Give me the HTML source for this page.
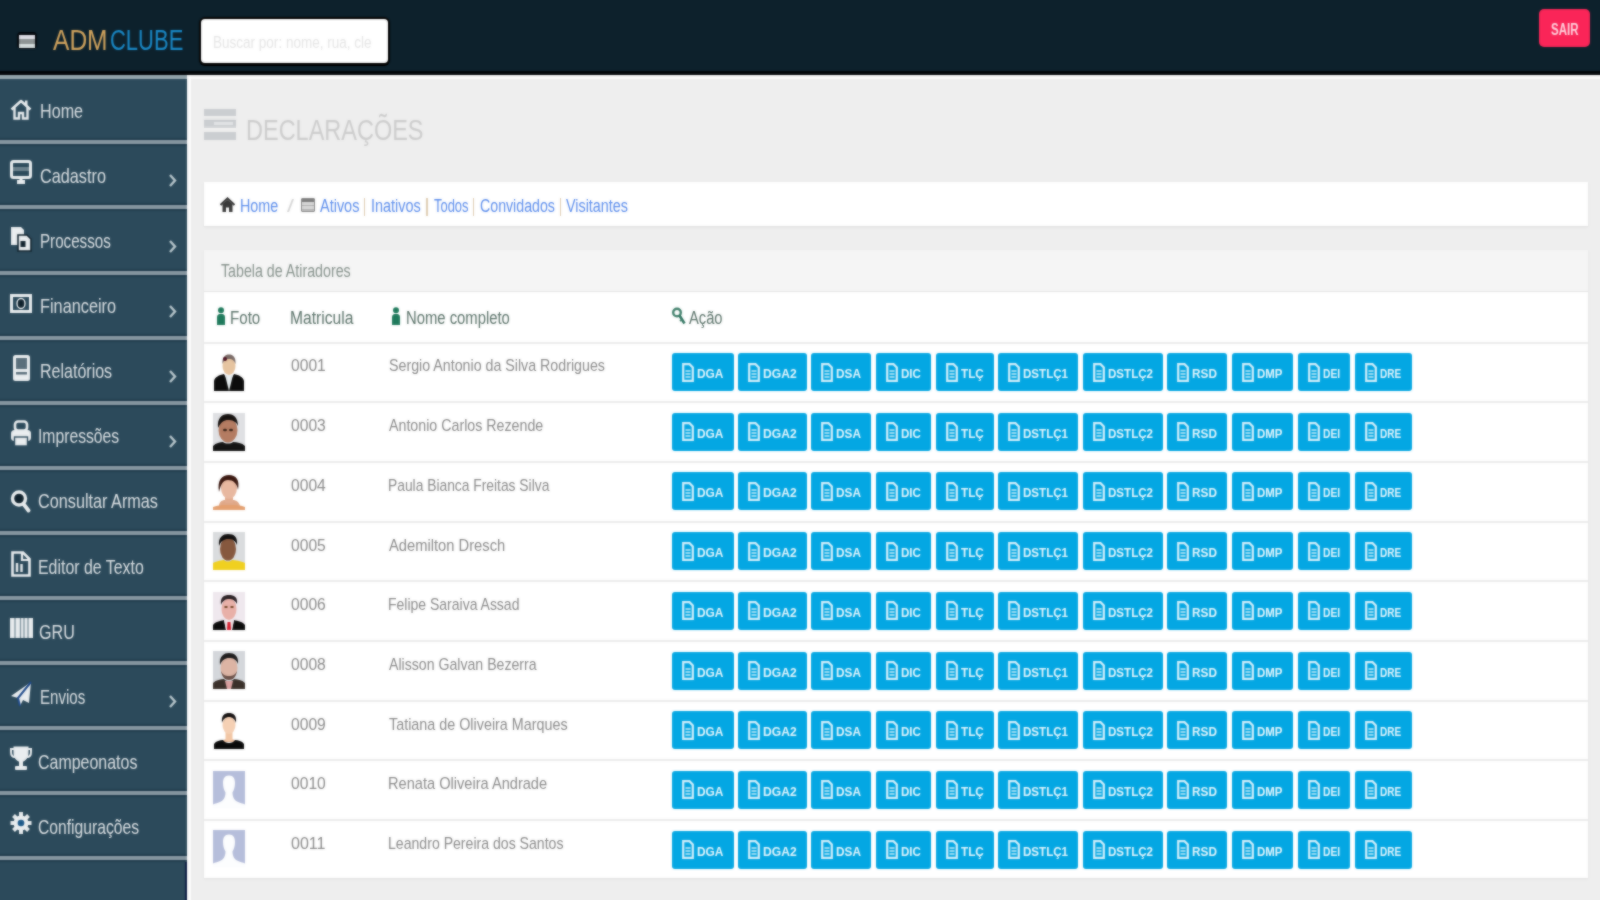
<!DOCTYPE html><html><head><meta charset="utf-8"><title>ADM Clube</title><style>
*{box-sizing:border-box;margin:0;padding:0}
html,body{width:1600px;height:900px;overflow:hidden;background:#eeeeee;font-family:"Liberation Sans", sans-serif}
#w{position:absolute;left:-20px;top:-20px;width:1640px;height:940px;background:#eeeeee;filter:none}
#w2{position:absolute;left:-20px;top:-20px;width:1640px;height:940px;background:#eeeeee;filter:blur(1px);opacity:0.6}
#c{position:absolute;left:20px;top:20px;width:1600px;height:900px}
.abs{position:absolute}
.t{position:absolute;line-height:1;white-space:nowrap;transform-origin:0 0}
.sep{position:absolute;left:-20px;width:207px;height:8px;background:#8898a2;border-top:2px solid #213d4e;border-bottom:2px solid #213d4e}
.row{position:absolute;left:204px;width:1384px;height:60px;border-top:2px solid #ececec}
.ph{position:absolute;left:212.5px}
.b{position:absolute;height:38px;background:#04a7e3;border-radius:3px}
.bt{position:absolute;line-height:1;white-space:nowrap;transform-origin:0 0;color:#f2fbff;font-size:13px}
</style></head><body><div id="w"><div id="c"><div class="abs" style="left:-20px;top:-20px;width:1640px;height:92px;background:#0d212c"></div><div class="abs" style="left:-20px;top:71px;width:1640px;height:4px;background:#03070a"></div><div class="abs" style="left:-20px;top:75px;width:1640px;height:4px;background:#f8f8f8"></div><div class="abs" style="left:17px;top:32px;width:20px;height:17px;background:#03080e;border-radius:4px"></div><div class="abs" style="left:19px;top:35px;width:16px;height:13px;background:linear-gradient(#dcdce4 0 4px,#8e9494 4px 9px,#d4dcdc 9px)"></div><div class="t" style="left:52.5px;top:25.5px;font-size:29px;color:#d4a65f;transform:scaleX(0.847);">ADM</div><div class="t" style="left:110.2px;top:25.5px;font-size:29px;color:#1a8ac9;transform:scaleX(0.758);">CLUBE</div><div class="abs" style="left:199px;top:16.5px;width:191px;height:49px;background:#000;border-radius:6px"></div><div class="abs" style="left:201px;top:19px;width:187px;height:44px;background:#fff;border-radius:4px"></div><div class="t" style="left:212.7px;top:35.0px;font-size:16px;color:#e6e6e6;transform:scaleX(0.845);">Buscar por: nome, rua, cle</div><div class="abs" style="left:1539px;top:9px;width:51px;height:38px;background:#fa2558;border-radius:5px"></div><div class="t" style="left:1551.0px;top:21.5px;font-size:16px;color:#ffd6e0;transform:scaleX(0.718);font-weight:bold;">SAIR</div><div class="abs" style="left:-20px;top:75px;width:207px;height:845px;background:#2c4a5b"></div><div class="abs" style="left:-20px;top:75px;width:207px;height:4px;background:#95a6ad"></div><div class="abs" style="left:187px;top:75px;width:4px;height:845px;background:#fbfbfb"></div><div class="abs" style="left:185px;top:860px;width:2px;height:60px;background:#0a1a40"></div><div class="sep" style="top:138.4px"></div><div class="t" style="left:40.2px;top:100.1px;font-size:21px;color:#dde2e5;transform:scaleX(0.769);">Home</div><div class="abs" style="left:10px;top:97.5px;line-height:0"><svg width="22" height="22" viewBox="0 0 22 22"><path d="M1.5 11.5 L11 3 L20.5 11.5" fill="none" stroke="#e9edef" stroke-width="2.6" stroke-linejoin="round"/><path d="M4.5 9.5 V20.5 H9 V15 H13 V20.5 H17.5 V9.5" fill="none" stroke="#e9edef" stroke-width="2.4"/><rect x="15" y="2.5" width="2.5" height="5" fill="#e9edef"/></svg></div><div class="sep" style="top:203.4px"></div><div class="t" style="left:40.2px;top:165.2px;font-size:21px;color:#dde2e5;transform:scaleX(0.774);">Cadastro</div><div class="abs" style="left:10px;top:160px;line-height:0"><svg width="22" height="26" viewBox="0 0 22 26"><rect x="1.5" y="1.5" width="19" height="16" rx="2" fill="none" stroke="#e9edef" stroke-width="3"/><rect x="3" y="7" width="16" height="4" fill="#e9edef" opacity="0.35"/><rect x="7" y="20" width="8" height="4" fill="#e9edef"/><rect x="9.5" y="17" width="3" height="4" fill="#e9edef"/></svg></div><svg class="abs" style="left:168px;top:173.4px" width="9" height="15" viewBox="0 0 9 15"><path d="M2 2 L7 7.5 L2 13" fill="none" stroke="#b8c6cc" stroke-width="2.4"/></svg><div class="sep" style="top:268.5px"></div><div class="t" style="left:40.3px;top:230.2px;font-size:21px;color:#dde2e5;transform:scaleX(0.722);">Processos</div><div class="abs" style="left:10px;top:225.5px;line-height:0"><svg width="22" height="26" viewBox="0 0 22 26"><path d="M1 1 H11 L14 4 V19 H1 Z" fill="#e9edef"/><path d="M8 9 H17 L21 13 V25 H8 Z" fill="#e9edef" stroke="#10222d" stroke-width="1.6"/><rect x="10.5" y="15" width="5" height="6" fill="#10222d"/></svg></div><svg class="abs" style="left:168px;top:238.5px" width="9" height="15" viewBox="0 0 9 15"><path d="M2 2 L7 7.5 L2 13" fill="none" stroke="#b8c6cc" stroke-width="2.4"/></svg><div class="sep" style="top:333.5px"></div><div class="t" style="left:40.2px;top:295.3px;font-size:21px;color:#dde2e5;transform:scaleX(0.776);">Financeiro</div><div class="abs" style="left:10px;top:294px;line-height:0"><svg width="22" height="20" viewBox="0 0 22 20"><rect x="1.5" y="1.5" width="19" height="16" fill="none" stroke="#e9edef" stroke-width="3"/><ellipse cx="11" cy="9.5" rx="4" ry="5" fill="#10222d" stroke="#e9edef" stroke-width="1.4"/></svg></div><svg class="abs" style="left:168px;top:303.5px" width="9" height="15" viewBox="0 0 9 15"><path d="M2 2 L7 7.5 L2 13" fill="none" stroke="#b8c6cc" stroke-width="2.4"/></svg><div class="sep" style="top:398.6px"></div><div class="t" style="left:40.2px;top:360.3px;font-size:21px;color:#dde2e5;transform:scaleX(0.763);">Relatórios</div><div class="abs" style="left:10px;top:354px;line-height:0"><svg width="22" height="28" viewBox="0 0 22 28"><rect x="3" y="1" width="17" height="26" rx="2.5" fill="#e9edef"/><rect x="6" y="4" width="11" height="11" fill="#5a6f7b"/><rect x="6" y="18" width="11" height="2.5" fill="#5a6f7b"/></svg></div><svg class="abs" style="left:168px;top:368.6px" width="9" height="15" viewBox="0 0 9 15"><path d="M2 2 L7 7.5 L2 13" fill="none" stroke="#b8c6cc" stroke-width="2.4"/></svg><div class="sep" style="top:463.6px"></div><div class="t" style="left:38.3px;top:425.4px;font-size:21px;color:#dde2e5;transform:scaleX(0.748);">Impressões</div><div class="abs" style="left:10px;top:420px;line-height:0"><svg width="22" height="27" viewBox="0 0 22 27"><rect x="5" y="1.5" width="12" height="9" rx="3" fill="none" stroke="#e9edef" stroke-width="2.6"/><rect x="1" y="10" width="20" height="11" rx="3.5" fill="#e9edef"/><rect x="4.5" y="17" width="13" height="9" fill="#e9edef" stroke="#2d4b5d" stroke-width="1.4"/></svg></div><svg class="abs" style="left:168px;top:433.6px" width="9" height="15" viewBox="0 0 9 15"><path d="M2 2 L7 7.5 L2 13" fill="none" stroke="#b8c6cc" stroke-width="2.4"/></svg><div class="sep" style="top:528.7px"></div><div class="t" style="left:38.2px;top:490.4px;font-size:21px;color:#dde2e5;transform:scaleX(0.773);">Consultar Armas</div><div class="abs" style="left:10px;top:489px;line-height:0"><svg width="22" height="24" viewBox="0 0 22 24"><circle cx="9" cy="9.5" r="6.5" fill="#10222d" stroke="#e9edef" stroke-width="3.4"/><path d="M13.5 15 L18.5 21.5" stroke="#e9edef" stroke-width="3.8" stroke-linecap="round"/></svg></div><div class="sep" style="top:593.8px"></div><div class="t" style="left:38.2px;top:555.5px;font-size:21px;color:#dde2e5;transform:scaleX(0.757);">Editor de Texto</div><div class="abs" style="left:10px;top:551px;line-height:0"><svg width="22" height="26" viewBox="0 0 22 26"><path d="M2.5 1.5 H13 L19.5 8 V24.5 H2.5 Z" fill="none" stroke="#e9edef" stroke-width="2.6"/><path d="M12 2 V9 H19" fill="none" stroke="#e9edef" stroke-width="2.2"/><path d="M7 12 V21 M11.5 13 V21" stroke="#e9edef" stroke-width="2.4"/></svg></div><div class="sep" style="top:658.8px"></div><div class="t" style="left:39.2px;top:620.5px;font-size:21px;color:#dde2e5;transform:scaleX(0.767);">GRU</div><div class="abs" style="left:10px;top:617px;line-height:0"><svg width="24" height="22" viewBox="0 0 24 22"><rect x="0" y="1" width="23" height="20" fill="#e9edef"/><path d="M5 1 V21 M10.5 1 V21 M14 1 V21 M18 1 V21" stroke="#7e929c" stroke-width="1.3"/></svg></div><div class="sep" style="top:723.8px"></div><div class="t" style="left:40.3px;top:685.6px;font-size:21px;color:#dde2e5;transform:scaleX(0.718);">Envios</div><div class="abs" style="left:10px;top:681px;line-height:0"><svg width="22" height="26" viewBox="0 0 22 26"><path d="M21 1 L1 15 L8 17 L10 25 L13 19 L19 22 Z" fill="#e9edef"/><path d="M21 1 L8 17 L10 25" fill="none" stroke="#1f4a8a" stroke-width="2"/></svg></div><svg class="abs" style="left:168px;top:693.8px" width="9" height="15" viewBox="0 0 9 15"><path d="M2 2 L7 7.5 L2 13" fill="none" stroke="#b8c6cc" stroke-width="2.4"/></svg><div class="sep" style="top:788.9px"></div><div class="t" style="left:38.2px;top:750.6px;font-size:21px;color:#dde2e5;transform:scaleX(0.760);">Campeonatos</div><div class="abs" style="left:10px;top:745px;line-height:0"><svg width="22" height="26" viewBox="0 0 22 26"><path d="M3.5 1.5 H18.5 V8 C18.5 14 14 17 11 17 C8 17 3.5 14 3.5 8 Z" fill="#e9edef"/><path d="M4 4 H1 V7 C1 11 3 12 5 12 M18 4 H21 V7 C21 11 19 12 17 12" fill="none" stroke="#e9edef" stroke-width="2"/><rect x="9" y="16" width="4" height="5" fill="#e9edef"/><rect x="5" y="21" width="12" height="4" rx="1" fill="#e9edef"/></svg></div><div class="sep" style="top:853.9px"></div><div class="t" style="left:38.3px;top:815.7px;font-size:21px;color:#dde2e5;transform:scaleX(0.746);">Configurações</div><div class="abs" style="left:10px;top:810px;line-height:0"><svg width="22" height="26" viewBox="0 0 22 26"><circle cx="11" cy="13" r="7.5" fill="#e9edef"/><path d="M11 2 V24 M0.5 13 H21.5 M3.5 5.5 L18.5 20.5 M18.5 5.5 L3.5 20.5" stroke="#e9edef" stroke-width="4"/><circle cx="11" cy="13" r="3.3" fill="#1d5a8a"/></svg></div><div class="abs" style="left:204px;top:109px;width:32px;height:31px;background:linear-gradient(#cbced1 0 7px,transparent 7px 10.5px,#cbced1 10.5px 18.5px,transparent 18.5px 23px,#cbced1 23px 31px)"></div><div class="abs" style="left:214px;top:122px;width:19px;height:3px;background:#e2e4e6"></div><div class="t" style="left:245.9px;top:116.0px;font-size:29px;color:#cdcdcd;transform:scaleX(0.810);">DECLARAÇÕES</div><div class="abs" style="left:204px;top:182px;width:1384px;height:44px;background:#fff;box-shadow:0 1px 2px rgba(0,0,0,0.07)"></div><svg class="abs" style="left:220px;top:197px" width="15" height="16" viewBox="0 0 15 16"><path d="M0.5 8 L7.5 1.5 L14.5 8" fill="none" stroke="#3a3a3a" stroke-width="2.2"/><path d="M2.5 7 V15 H6 V10.5 H9 V15 H12.5 V7 L7.5 3 Z" fill="#3a3a3a"/></svg><div class="t" style="left:239.8px;top:196.8px;font-size:18px;color:#5a8cec;transform:scaleX(0.796);">Home</div><div class="t" style="left:286.5px;top:197.3px;font-size:18px;color:#d6d6d6;transform:scaleX(1.400);">/</div><div class="abs" style="left:301px;top:198px;width:14px;height:14px;background:linear-gradient(#7d7d7d 0 3px,#d8d8d8 3px 6px,#b0b0b0 6px 7px,#d8d8d8 7px 10px,#b8b8b8 10px);border:1px solid #888;border-radius:1px"></div><div class="t" style="left:320.0px;top:196.8px;font-size:18px;color:#5a8cec;transform:scaleX(0.804);">Ativos</div><div class="t" style="left:371.2px;top:196.8px;font-size:18px;color:#5a8cec;transform:scaleX(0.803);">Inativos</div><div class="t" style="left:433.7px;top:196.8px;font-size:18px;color:#5a8cec;transform:scaleX(0.719);">Todos</div><div class="t" style="left:479.5px;top:196.8px;font-size:18px;color:#5a8cec;transform:scaleX(0.788);">Convidados</div><div class="t" style="left:566.4px;top:196.8px;font-size:18px;color:#5a8cec;transform:scaleX(0.797);">Visitantes</div><div class="abs" style="left:363.65px;top:197.5px;width:1.5px;height:18px;background:#dfcdb2"></div><div class="abs" style="left:426.25px;top:197.5px;width:1.5px;height:18px;background:#dfcdb2"></div><div class="abs" style="left:472.75px;top:197.5px;width:1.5px;height:18px;background:#dfcdb2"></div><div class="abs" style="left:559.65px;top:197.5px;width:1.5px;height:18px;background:#dfcdb2"></div><div class="abs" style="left:204px;top:250px;width:1384px;height:628px;background:#fff;box-shadow:0 1px 2px rgba(0,0,0,0.06)"></div><div class="abs" style="left:204px;top:250px;width:1384px;height:42px;background:#f5f5f5;border-bottom:1px solid #e6e6e6"></div><div class="t" style="left:221.0px;top:262.1px;font-size:18px;color:#86928c;transform:scaleX(0.790);">Tabela de Atiradores</div><svg class="abs" style="left:215.5px;top:307px" width="10" height="18" viewBox="0 0 10 18"><circle cx="5" cy="3.2" r="3" fill="#1f7a5c"/><path d="M1 18 V10 C1 7.5 3 7 5 7 C7 7 9 7.5 9 10 V18 Z" fill="#1f7a5c"/></svg><div class="t" style="left:229.8px;top:308.8px;font-size:18px;color:#5a7269;transform:scaleX(0.840);">Foto</div><div class="t" style="left:290.1px;top:308.8px;font-size:18px;color:#5a7269;transform:scaleX(0.868);">Matricula</div><svg class="abs" style="left:390.5px;top:307px" width="10" height="18" viewBox="0 0 10 18"><circle cx="5" cy="3.2" r="3" fill="#1f7a5c"/><path d="M1 18 V10 C1 7.5 3 7 5 7 C7 7 9 7.5 9 10 V18 Z" fill="#1f7a5c"/></svg><div class="t" style="left:406.2px;top:308.8px;font-size:18px;color:#5a7269;transform:scaleX(0.824);">Nome completo</div><svg class="abs" style="left:671.5px;top:307px" width="15" height="18" viewBox="0 0 15 18"><circle cx="5" cy="5.5" r="3.8" fill="none" stroke="#3f7f6a" stroke-width="2.4"/><path d="M7.5 8.5 L12.5 16.5" stroke="#2f7460" stroke-width="2.6"/><path d="M10 12.5 L8 14" stroke="#3f7f6a" stroke-width="1.8"/></svg><div class="t" style="left:689.0px;top:308.8px;font-size:18px;color:#5a7269;transform:scaleX(0.817);">Ação</div><div class="row" style="top:341.5px"></div><div class="ph" style="top:352.8px;line-height:0"><svg width="32" height="38" viewBox="0 0 32 38"><rect width="32" height="38" fill="#fff"/><ellipse cx="16" cy="13" rx="6.5" ry="9" fill="#e6c4a0"/><path d="M9.5 11 C9 4 12 1.5 16 1.5 C20 1.5 23 4 22.5 11 C21 7 19 6 16 6 C13 6 11 7 9.5 11 Z" fill="#7a6a66"/><circle cx="12" cy="6" r="2" fill="#4a1020"/><path d="M1 38 V28 C2 24 6 22 11 21 L16 30 L21 21 C26 22 30 24 31 28 V38 Z" fill="#0c0c0c"/><path d="M12 22 L16 38 L20 22 Z" fill="#e8eef0"/></svg></div><div class="t" style="left:291.0px;top:357.4px;font-size:17px;color:#8a8a8a;transform:scaleX(0.919);">0001</div><div class="t" style="left:389.0px;top:357.4px;font-size:17px;color:#8a8a8a;transform:scaleX(0.837);">Sergio Antonio da Silva Rodrigues</div><div class="b" style="left:672px;top:353.0px;width:62px"><svg width="12" height="19" viewBox="0 0 12 19" style="position:absolute;left:9.5px;top:9.5px"><path d="M1.2 1.2 H7.5 L10.8 4.5 V17.8 H1.2 Z" fill="none" stroke="#d6f0fb" stroke-width="2.2"/><path d="M3.5 8 H8.5 M3.5 11 H8.5 M3.5 14 H8.5" stroke="#c8ebf8" stroke-width="1.3"/></svg></div><div class="b" style="left:738px;top:353.0px;width:69px"><svg width="12" height="19" viewBox="0 0 12 19" style="position:absolute;left:9.5px;top:9.5px"><path d="M1.2 1.2 H7.5 L10.8 4.5 V17.8 H1.2 Z" fill="none" stroke="#d6f0fb" stroke-width="2.2"/><path d="M3.5 8 H8.5 M3.5 11 H8.5 M3.5 14 H8.5" stroke="#c8ebf8" stroke-width="1.3"/></svg></div><div class="b" style="left:811px;top:353.0px;width:60px"><svg width="12" height="19" viewBox="0 0 12 19" style="position:absolute;left:9.5px;top:9.5px"><path d="M1.2 1.2 H7.5 L10.8 4.5 V17.8 H1.2 Z" fill="none" stroke="#d6f0fb" stroke-width="2.2"/><path d="M3.5 8 H8.5 M3.5 11 H8.5 M3.5 14 H8.5" stroke="#c8ebf8" stroke-width="1.3"/></svg></div><div class="b" style="left:876px;top:353.0px;width:55px"><svg width="12" height="19" viewBox="0 0 12 19" style="position:absolute;left:9.5px;top:9.5px"><path d="M1.2 1.2 H7.5 L10.8 4.5 V17.8 H1.2 Z" fill="none" stroke="#d6f0fb" stroke-width="2.2"/><path d="M3.5 8 H8.5 M3.5 11 H8.5 M3.5 14 H8.5" stroke="#c8ebf8" stroke-width="1.3"/></svg></div><div class="b" style="left:936px;top:353.0px;width:58px"><svg width="12" height="19" viewBox="0 0 12 19" style="position:absolute;left:9.5px;top:9.5px"><path d="M1.2 1.2 H7.5 L10.8 4.5 V17.8 H1.2 Z" fill="none" stroke="#d6f0fb" stroke-width="2.2"/><path d="M3.5 8 H8.5 M3.5 11 H8.5 M3.5 14 H8.5" stroke="#c8ebf8" stroke-width="1.3"/></svg></div><div class="b" style="left:998px;top:353.0px;width:80px"><svg width="12" height="19" viewBox="0 0 12 19" style="position:absolute;left:9.5px;top:9.5px"><path d="M1.2 1.2 H7.5 L10.8 4.5 V17.8 H1.2 Z" fill="none" stroke="#d6f0fb" stroke-width="2.2"/><path d="M3.5 8 H8.5 M3.5 11 H8.5 M3.5 14 H8.5" stroke="#c8ebf8" stroke-width="1.3"/></svg></div><div class="b" style="left:1083px;top:353.0px;width:80px"><svg width="12" height="19" viewBox="0 0 12 19" style="position:absolute;left:9.5px;top:9.5px"><path d="M1.2 1.2 H7.5 L10.8 4.5 V17.8 H1.2 Z" fill="none" stroke="#d6f0fb" stroke-width="2.2"/><path d="M3.5 8 H8.5 M3.5 11 H8.5 M3.5 14 H8.5" stroke="#c8ebf8" stroke-width="1.3"/></svg></div><div class="b" style="left:1167px;top:353.0px;width:60px"><svg width="12" height="19" viewBox="0 0 12 19" style="position:absolute;left:9.5px;top:9.5px"><path d="M1.2 1.2 H7.5 L10.8 4.5 V17.8 H1.2 Z" fill="none" stroke="#d6f0fb" stroke-width="2.2"/><path d="M3.5 8 H8.5 M3.5 11 H8.5 M3.5 14 H8.5" stroke="#c8ebf8" stroke-width="1.3"/></svg></div><div class="b" style="left:1232px;top:353.0px;width:61px"><svg width="12" height="19" viewBox="0 0 12 19" style="position:absolute;left:9.5px;top:9.5px"><path d="M1.2 1.2 H7.5 L10.8 4.5 V17.8 H1.2 Z" fill="none" stroke="#d6f0fb" stroke-width="2.2"/><path d="M3.5 8 H8.5 M3.5 11 H8.5 M3.5 14 H8.5" stroke="#c8ebf8" stroke-width="1.3"/></svg></div><div class="b" style="left:1298px;top:353.0px;width:52px"><svg width="12" height="19" viewBox="0 0 12 19" style="position:absolute;left:9.5px;top:9.5px"><path d="M1.2 1.2 H7.5 L10.8 4.5 V17.8 H1.2 Z" fill="none" stroke="#d6f0fb" stroke-width="2.2"/><path d="M3.5 8 H8.5 M3.5 11 H8.5 M3.5 14 H8.5" stroke="#c8ebf8" stroke-width="1.3"/></svg></div><div class="b" style="left:1355px;top:353.0px;width:57px"><svg width="12" height="19" viewBox="0 0 12 19" style="position:absolute;left:9.5px;top:9.5px"><path d="M1.2 1.2 H7.5 L10.8 4.5 V17.8 H1.2 Z" fill="none" stroke="#d6f0fb" stroke-width="2.2"/><path d="M3.5 8 H8.5 M3.5 11 H8.5 M3.5 14 H8.5" stroke="#c8ebf8" stroke-width="1.3"/></svg></div><div class="t" style="left:697.0px;top:367.0px;font-size:13px;color:#e8f7fd;transform:scaleX(0.914);font-weight:bold;">DGA</div><div class="t" style="left:763.0px;top:367.0px;font-size:13px;color:#e8f7fd;transform:scaleX(0.931);font-weight:bold;">DGA2</div><div class="t" style="left:836.0px;top:367.0px;font-size:13px;color:#e8f7fd;transform:scaleX(0.907);font-weight:bold;">DSA</div><div class="t" style="left:901.0px;top:367.0px;font-size:13px;color:#e8f7fd;transform:scaleX(0.886);font-weight:bold;">DIC</div><div class="t" style="left:961.0px;top:367.0px;font-size:13px;color:#e8f7fd;transform:scaleX(0.900);font-weight:bold;">TLÇ</div><div class="t" style="left:1023.0px;top:367.0px;font-size:13px;color:#e8f7fd;transform:scaleX(0.890);font-weight:bold;">DSTLÇ1</div><div class="t" style="left:1108.0px;top:367.0px;font-size:13px;color:#e8f7fd;transform:scaleX(0.890);font-weight:bold;">DSTLÇ2</div><div class="t" style="left:1192.0px;top:367.0px;font-size:13px;color:#e8f7fd;transform:scaleX(0.907);font-weight:bold;">RSD</div><div class="t" style="left:1257.0px;top:367.0px;font-size:13px;color:#e8f7fd;transform:scaleX(0.879);font-weight:bold;">DMP</div><div class="t" style="left:1323.0px;top:367.0px;font-size:13px;color:#e8f7fd;transform:scaleX(0.786);font-weight:bold;">DEI</div><div class="t" style="left:1380.0px;top:367.0px;font-size:13px;color:#e8f7fd;transform:scaleX(0.768);font-weight:bold;">DRE</div><div class="row" style="top:401.2px"></div><div class="ph" style="top:412.5px;line-height:0"><svg width="32" height="38" viewBox="0 0 32 38"><rect width="32" height="38" fill="#dfe0e3"/><ellipse cx="15" cy="17" rx="9.5" ry="12.5" fill="#b47c62"/><path d="M5 15 C4 5 9 1 15 1 C21 1 25 5 25 13 C23 8 19 7 15 7 C11 7 8 9 5 15 Z" fill="#161210"/><ellipse cx="12" cy="17" rx="2" ry="1.2" fill="#3a2418"/><ellipse cx="18" cy="17" rx="2" ry="1.2" fill="#3a2418"/><path d="M0 38 V33 C3 30 7 29 10 29 C12 31 18 31 20 29 C24 29 29 30 32 33 V38 Z" fill="#141414"/></svg></div><div class="t" style="left:291.0px;top:417.1px;font-size:17px;color:#8a8a8a;transform:scaleX(0.919);">0003</div><div class="t" style="left:389.0px;top:417.1px;font-size:17px;color:#8a8a8a;transform:scaleX(0.837);">Antonio Carlos Rezende</div><div class="b" style="left:672px;top:412.7px;width:62px"><svg width="12" height="19" viewBox="0 0 12 19" style="position:absolute;left:9.5px;top:9.5px"><path d="M1.2 1.2 H7.5 L10.8 4.5 V17.8 H1.2 Z" fill="none" stroke="#d6f0fb" stroke-width="2.2"/><path d="M3.5 8 H8.5 M3.5 11 H8.5 M3.5 14 H8.5" stroke="#c8ebf8" stroke-width="1.3"/></svg></div><div class="b" style="left:738px;top:412.7px;width:69px"><svg width="12" height="19" viewBox="0 0 12 19" style="position:absolute;left:9.5px;top:9.5px"><path d="M1.2 1.2 H7.5 L10.8 4.5 V17.8 H1.2 Z" fill="none" stroke="#d6f0fb" stroke-width="2.2"/><path d="M3.5 8 H8.5 M3.5 11 H8.5 M3.5 14 H8.5" stroke="#c8ebf8" stroke-width="1.3"/></svg></div><div class="b" style="left:811px;top:412.7px;width:60px"><svg width="12" height="19" viewBox="0 0 12 19" style="position:absolute;left:9.5px;top:9.5px"><path d="M1.2 1.2 H7.5 L10.8 4.5 V17.8 H1.2 Z" fill="none" stroke="#d6f0fb" stroke-width="2.2"/><path d="M3.5 8 H8.5 M3.5 11 H8.5 M3.5 14 H8.5" stroke="#c8ebf8" stroke-width="1.3"/></svg></div><div class="b" style="left:876px;top:412.7px;width:55px"><svg width="12" height="19" viewBox="0 0 12 19" style="position:absolute;left:9.5px;top:9.5px"><path d="M1.2 1.2 H7.5 L10.8 4.5 V17.8 H1.2 Z" fill="none" stroke="#d6f0fb" stroke-width="2.2"/><path d="M3.5 8 H8.5 M3.5 11 H8.5 M3.5 14 H8.5" stroke="#c8ebf8" stroke-width="1.3"/></svg></div><div class="b" style="left:936px;top:412.7px;width:58px"><svg width="12" height="19" viewBox="0 0 12 19" style="position:absolute;left:9.5px;top:9.5px"><path d="M1.2 1.2 H7.5 L10.8 4.5 V17.8 H1.2 Z" fill="none" stroke="#d6f0fb" stroke-width="2.2"/><path d="M3.5 8 H8.5 M3.5 11 H8.5 M3.5 14 H8.5" stroke="#c8ebf8" stroke-width="1.3"/></svg></div><div class="b" style="left:998px;top:412.7px;width:80px"><svg width="12" height="19" viewBox="0 0 12 19" style="position:absolute;left:9.5px;top:9.5px"><path d="M1.2 1.2 H7.5 L10.8 4.5 V17.8 H1.2 Z" fill="none" stroke="#d6f0fb" stroke-width="2.2"/><path d="M3.5 8 H8.5 M3.5 11 H8.5 M3.5 14 H8.5" stroke="#c8ebf8" stroke-width="1.3"/></svg></div><div class="b" style="left:1083px;top:412.7px;width:80px"><svg width="12" height="19" viewBox="0 0 12 19" style="position:absolute;left:9.5px;top:9.5px"><path d="M1.2 1.2 H7.5 L10.8 4.5 V17.8 H1.2 Z" fill="none" stroke="#d6f0fb" stroke-width="2.2"/><path d="M3.5 8 H8.5 M3.5 11 H8.5 M3.5 14 H8.5" stroke="#c8ebf8" stroke-width="1.3"/></svg></div><div class="b" style="left:1167px;top:412.7px;width:60px"><svg width="12" height="19" viewBox="0 0 12 19" style="position:absolute;left:9.5px;top:9.5px"><path d="M1.2 1.2 H7.5 L10.8 4.5 V17.8 H1.2 Z" fill="none" stroke="#d6f0fb" stroke-width="2.2"/><path d="M3.5 8 H8.5 M3.5 11 H8.5 M3.5 14 H8.5" stroke="#c8ebf8" stroke-width="1.3"/></svg></div><div class="b" style="left:1232px;top:412.7px;width:61px"><svg width="12" height="19" viewBox="0 0 12 19" style="position:absolute;left:9.5px;top:9.5px"><path d="M1.2 1.2 H7.5 L10.8 4.5 V17.8 H1.2 Z" fill="none" stroke="#d6f0fb" stroke-width="2.2"/><path d="M3.5 8 H8.5 M3.5 11 H8.5 M3.5 14 H8.5" stroke="#c8ebf8" stroke-width="1.3"/></svg></div><div class="b" style="left:1298px;top:412.7px;width:52px"><svg width="12" height="19" viewBox="0 0 12 19" style="position:absolute;left:9.5px;top:9.5px"><path d="M1.2 1.2 H7.5 L10.8 4.5 V17.8 H1.2 Z" fill="none" stroke="#d6f0fb" stroke-width="2.2"/><path d="M3.5 8 H8.5 M3.5 11 H8.5 M3.5 14 H8.5" stroke="#c8ebf8" stroke-width="1.3"/></svg></div><div class="b" style="left:1355px;top:412.7px;width:57px"><svg width="12" height="19" viewBox="0 0 12 19" style="position:absolute;left:9.5px;top:9.5px"><path d="M1.2 1.2 H7.5 L10.8 4.5 V17.8 H1.2 Z" fill="none" stroke="#d6f0fb" stroke-width="2.2"/><path d="M3.5 8 H8.5 M3.5 11 H8.5 M3.5 14 H8.5" stroke="#c8ebf8" stroke-width="1.3"/></svg></div><div class="t" style="left:697.0px;top:426.7px;font-size:13px;color:#e8f7fd;transform:scaleX(0.914);font-weight:bold;">DGA</div><div class="t" style="left:763.0px;top:426.7px;font-size:13px;color:#e8f7fd;transform:scaleX(0.931);font-weight:bold;">DGA2</div><div class="t" style="left:836.0px;top:426.7px;font-size:13px;color:#e8f7fd;transform:scaleX(0.907);font-weight:bold;">DSA</div><div class="t" style="left:901.0px;top:426.7px;font-size:13px;color:#e8f7fd;transform:scaleX(0.886);font-weight:bold;">DIC</div><div class="t" style="left:961.0px;top:426.7px;font-size:13px;color:#e8f7fd;transform:scaleX(0.900);font-weight:bold;">TLÇ</div><div class="t" style="left:1023.0px;top:426.7px;font-size:13px;color:#e8f7fd;transform:scaleX(0.890);font-weight:bold;">DSTLÇ1</div><div class="t" style="left:1108.0px;top:426.7px;font-size:13px;color:#e8f7fd;transform:scaleX(0.890);font-weight:bold;">DSTLÇ2</div><div class="t" style="left:1192.0px;top:426.7px;font-size:13px;color:#e8f7fd;transform:scaleX(0.907);font-weight:bold;">RSD</div><div class="t" style="left:1257.0px;top:426.7px;font-size:13px;color:#e8f7fd;transform:scaleX(0.879);font-weight:bold;">DMP</div><div class="t" style="left:1323.0px;top:426.7px;font-size:13px;color:#e8f7fd;transform:scaleX(0.786);font-weight:bold;">DEI</div><div class="t" style="left:1380.0px;top:426.7px;font-size:13px;color:#e8f7fd;transform:scaleX(0.768);font-weight:bold;">DRE</div><div class="row" style="top:460.9px"></div><div class="ph" style="top:472.2px;line-height:0"><svg width="32" height="38" viewBox="0 0 32 38"><rect width="32" height="38" fill="#fff"/><path d="M6 34 C6 30 9 28 12 28 H20 C23 28 26 30 27 34 Z" fill="#e0a888"/><rect x="12" y="22" width="8" height="9" fill="#e2ac90"/><ellipse cx="16" cy="16" rx="8" ry="11" fill="#e8b8a0"/><path d="M6 20 C4 8 9 3 16 3 C23 3 27 8 25 18 C24 11 20 8 15 8 C10 8 8 12 6 20 Z" fill="#3a1810"/><path d="M0 38 V35 C6 33 10 33 16 33 C22 33 27 33 32 35 V38 Z" fill="#e4a070"/></svg></div><div class="t" style="left:291.0px;top:476.8px;font-size:17px;color:#8a8a8a;transform:scaleX(0.919);">0004</div><div class="t" style="left:388.2px;top:476.8px;font-size:17px;color:#8a8a8a;transform:scaleX(0.813);">Paula Bianca Freitas Silva</div><div class="b" style="left:672px;top:472.4px;width:62px"><svg width="12" height="19" viewBox="0 0 12 19" style="position:absolute;left:9.5px;top:9.5px"><path d="M1.2 1.2 H7.5 L10.8 4.5 V17.8 H1.2 Z" fill="none" stroke="#d6f0fb" stroke-width="2.2"/><path d="M3.5 8 H8.5 M3.5 11 H8.5 M3.5 14 H8.5" stroke="#c8ebf8" stroke-width="1.3"/></svg></div><div class="b" style="left:738px;top:472.4px;width:69px"><svg width="12" height="19" viewBox="0 0 12 19" style="position:absolute;left:9.5px;top:9.5px"><path d="M1.2 1.2 H7.5 L10.8 4.5 V17.8 H1.2 Z" fill="none" stroke="#d6f0fb" stroke-width="2.2"/><path d="M3.5 8 H8.5 M3.5 11 H8.5 M3.5 14 H8.5" stroke="#c8ebf8" stroke-width="1.3"/></svg></div><div class="b" style="left:811px;top:472.4px;width:60px"><svg width="12" height="19" viewBox="0 0 12 19" style="position:absolute;left:9.5px;top:9.5px"><path d="M1.2 1.2 H7.5 L10.8 4.5 V17.8 H1.2 Z" fill="none" stroke="#d6f0fb" stroke-width="2.2"/><path d="M3.5 8 H8.5 M3.5 11 H8.5 M3.5 14 H8.5" stroke="#c8ebf8" stroke-width="1.3"/></svg></div><div class="b" style="left:876px;top:472.4px;width:55px"><svg width="12" height="19" viewBox="0 0 12 19" style="position:absolute;left:9.5px;top:9.5px"><path d="M1.2 1.2 H7.5 L10.8 4.5 V17.8 H1.2 Z" fill="none" stroke="#d6f0fb" stroke-width="2.2"/><path d="M3.5 8 H8.5 M3.5 11 H8.5 M3.5 14 H8.5" stroke="#c8ebf8" stroke-width="1.3"/></svg></div><div class="b" style="left:936px;top:472.4px;width:58px"><svg width="12" height="19" viewBox="0 0 12 19" style="position:absolute;left:9.5px;top:9.5px"><path d="M1.2 1.2 H7.5 L10.8 4.5 V17.8 H1.2 Z" fill="none" stroke="#d6f0fb" stroke-width="2.2"/><path d="M3.5 8 H8.5 M3.5 11 H8.5 M3.5 14 H8.5" stroke="#c8ebf8" stroke-width="1.3"/></svg></div><div class="b" style="left:998px;top:472.4px;width:80px"><svg width="12" height="19" viewBox="0 0 12 19" style="position:absolute;left:9.5px;top:9.5px"><path d="M1.2 1.2 H7.5 L10.8 4.5 V17.8 H1.2 Z" fill="none" stroke="#d6f0fb" stroke-width="2.2"/><path d="M3.5 8 H8.5 M3.5 11 H8.5 M3.5 14 H8.5" stroke="#c8ebf8" stroke-width="1.3"/></svg></div><div class="b" style="left:1083px;top:472.4px;width:80px"><svg width="12" height="19" viewBox="0 0 12 19" style="position:absolute;left:9.5px;top:9.5px"><path d="M1.2 1.2 H7.5 L10.8 4.5 V17.8 H1.2 Z" fill="none" stroke="#d6f0fb" stroke-width="2.2"/><path d="M3.5 8 H8.5 M3.5 11 H8.5 M3.5 14 H8.5" stroke="#c8ebf8" stroke-width="1.3"/></svg></div><div class="b" style="left:1167px;top:472.4px;width:60px"><svg width="12" height="19" viewBox="0 0 12 19" style="position:absolute;left:9.5px;top:9.5px"><path d="M1.2 1.2 H7.5 L10.8 4.5 V17.8 H1.2 Z" fill="none" stroke="#d6f0fb" stroke-width="2.2"/><path d="M3.5 8 H8.5 M3.5 11 H8.5 M3.5 14 H8.5" stroke="#c8ebf8" stroke-width="1.3"/></svg></div><div class="b" style="left:1232px;top:472.4px;width:61px"><svg width="12" height="19" viewBox="0 0 12 19" style="position:absolute;left:9.5px;top:9.5px"><path d="M1.2 1.2 H7.5 L10.8 4.5 V17.8 H1.2 Z" fill="none" stroke="#d6f0fb" stroke-width="2.2"/><path d="M3.5 8 H8.5 M3.5 11 H8.5 M3.5 14 H8.5" stroke="#c8ebf8" stroke-width="1.3"/></svg></div><div class="b" style="left:1298px;top:472.4px;width:52px"><svg width="12" height="19" viewBox="0 0 12 19" style="position:absolute;left:9.5px;top:9.5px"><path d="M1.2 1.2 H7.5 L10.8 4.5 V17.8 H1.2 Z" fill="none" stroke="#d6f0fb" stroke-width="2.2"/><path d="M3.5 8 H8.5 M3.5 11 H8.5 M3.5 14 H8.5" stroke="#c8ebf8" stroke-width="1.3"/></svg></div><div class="b" style="left:1355px;top:472.4px;width:57px"><svg width="12" height="19" viewBox="0 0 12 19" style="position:absolute;left:9.5px;top:9.5px"><path d="M1.2 1.2 H7.5 L10.8 4.5 V17.8 H1.2 Z" fill="none" stroke="#d6f0fb" stroke-width="2.2"/><path d="M3.5 8 H8.5 M3.5 11 H8.5 M3.5 14 H8.5" stroke="#c8ebf8" stroke-width="1.3"/></svg></div><div class="t" style="left:697.0px;top:486.4px;font-size:13px;color:#e8f7fd;transform:scaleX(0.914);font-weight:bold;">DGA</div><div class="t" style="left:763.0px;top:486.4px;font-size:13px;color:#e8f7fd;transform:scaleX(0.931);font-weight:bold;">DGA2</div><div class="t" style="left:836.0px;top:486.4px;font-size:13px;color:#e8f7fd;transform:scaleX(0.907);font-weight:bold;">DSA</div><div class="t" style="left:901.0px;top:486.4px;font-size:13px;color:#e8f7fd;transform:scaleX(0.886);font-weight:bold;">DIC</div><div class="t" style="left:961.0px;top:486.4px;font-size:13px;color:#e8f7fd;transform:scaleX(0.900);font-weight:bold;">TLÇ</div><div class="t" style="left:1023.0px;top:486.4px;font-size:13px;color:#e8f7fd;transform:scaleX(0.890);font-weight:bold;">DSTLÇ1</div><div class="t" style="left:1108.0px;top:486.4px;font-size:13px;color:#e8f7fd;transform:scaleX(0.890);font-weight:bold;">DSTLÇ2</div><div class="t" style="left:1192.0px;top:486.4px;font-size:13px;color:#e8f7fd;transform:scaleX(0.907);font-weight:bold;">RSD</div><div class="t" style="left:1257.0px;top:486.4px;font-size:13px;color:#e8f7fd;transform:scaleX(0.879);font-weight:bold;">DMP</div><div class="t" style="left:1323.0px;top:486.4px;font-size:13px;color:#e8f7fd;transform:scaleX(0.786);font-weight:bold;">DEI</div><div class="t" style="left:1380.0px;top:486.4px;font-size:13px;color:#e8f7fd;transform:scaleX(0.768);font-weight:bold;">DRE</div><div class="row" style="top:520.6px"></div><div class="ph" style="top:531.9px;line-height:0"><svg width="32" height="38" viewBox="0 0 32 38"><rect width="32" height="38" fill="#dadcde"/><ellipse cx="15" cy="17" rx="8" ry="11.5" fill="#86583e"/><path d="M6 14 C5 5 10 2 15 2 C21 2 25 5 24 13 C22 8 19 7 15 7 C11 7 8 9 6 14 Z" fill="#121010"/><path d="M0 38 V31 C4 29 9 28 11 28 C13 30 17 30 19 28 C22 28 28 29 32 31 V38 Z" fill="#f0d020"/></svg></div><div class="t" style="left:291.0px;top:536.5px;font-size:17px;color:#8a8a8a;transform:scaleX(0.919);">0005</div><div class="t" style="left:389.0px;top:536.5px;font-size:17px;color:#8a8a8a;transform:scaleX(0.866);">Ademilton Dresch</div><div class="b" style="left:672px;top:532.1px;width:62px"><svg width="12" height="19" viewBox="0 0 12 19" style="position:absolute;left:9.5px;top:9.5px"><path d="M1.2 1.2 H7.5 L10.8 4.5 V17.8 H1.2 Z" fill="none" stroke="#d6f0fb" stroke-width="2.2"/><path d="M3.5 8 H8.5 M3.5 11 H8.5 M3.5 14 H8.5" stroke="#c8ebf8" stroke-width="1.3"/></svg></div><div class="b" style="left:738px;top:532.1px;width:69px"><svg width="12" height="19" viewBox="0 0 12 19" style="position:absolute;left:9.5px;top:9.5px"><path d="M1.2 1.2 H7.5 L10.8 4.5 V17.8 H1.2 Z" fill="none" stroke="#d6f0fb" stroke-width="2.2"/><path d="M3.5 8 H8.5 M3.5 11 H8.5 M3.5 14 H8.5" stroke="#c8ebf8" stroke-width="1.3"/></svg></div><div class="b" style="left:811px;top:532.1px;width:60px"><svg width="12" height="19" viewBox="0 0 12 19" style="position:absolute;left:9.5px;top:9.5px"><path d="M1.2 1.2 H7.5 L10.8 4.5 V17.8 H1.2 Z" fill="none" stroke="#d6f0fb" stroke-width="2.2"/><path d="M3.5 8 H8.5 M3.5 11 H8.5 M3.5 14 H8.5" stroke="#c8ebf8" stroke-width="1.3"/></svg></div><div class="b" style="left:876px;top:532.1px;width:55px"><svg width="12" height="19" viewBox="0 0 12 19" style="position:absolute;left:9.5px;top:9.5px"><path d="M1.2 1.2 H7.5 L10.8 4.5 V17.8 H1.2 Z" fill="none" stroke="#d6f0fb" stroke-width="2.2"/><path d="M3.5 8 H8.5 M3.5 11 H8.5 M3.5 14 H8.5" stroke="#c8ebf8" stroke-width="1.3"/></svg></div><div class="b" style="left:936px;top:532.1px;width:58px"><svg width="12" height="19" viewBox="0 0 12 19" style="position:absolute;left:9.5px;top:9.5px"><path d="M1.2 1.2 H7.5 L10.8 4.5 V17.8 H1.2 Z" fill="none" stroke="#d6f0fb" stroke-width="2.2"/><path d="M3.5 8 H8.5 M3.5 11 H8.5 M3.5 14 H8.5" stroke="#c8ebf8" stroke-width="1.3"/></svg></div><div class="b" style="left:998px;top:532.1px;width:80px"><svg width="12" height="19" viewBox="0 0 12 19" style="position:absolute;left:9.5px;top:9.5px"><path d="M1.2 1.2 H7.5 L10.8 4.5 V17.8 H1.2 Z" fill="none" stroke="#d6f0fb" stroke-width="2.2"/><path d="M3.5 8 H8.5 M3.5 11 H8.5 M3.5 14 H8.5" stroke="#c8ebf8" stroke-width="1.3"/></svg></div><div class="b" style="left:1083px;top:532.1px;width:80px"><svg width="12" height="19" viewBox="0 0 12 19" style="position:absolute;left:9.5px;top:9.5px"><path d="M1.2 1.2 H7.5 L10.8 4.5 V17.8 H1.2 Z" fill="none" stroke="#d6f0fb" stroke-width="2.2"/><path d="M3.5 8 H8.5 M3.5 11 H8.5 M3.5 14 H8.5" stroke="#c8ebf8" stroke-width="1.3"/></svg></div><div class="b" style="left:1167px;top:532.1px;width:60px"><svg width="12" height="19" viewBox="0 0 12 19" style="position:absolute;left:9.5px;top:9.5px"><path d="M1.2 1.2 H7.5 L10.8 4.5 V17.8 H1.2 Z" fill="none" stroke="#d6f0fb" stroke-width="2.2"/><path d="M3.5 8 H8.5 M3.5 11 H8.5 M3.5 14 H8.5" stroke="#c8ebf8" stroke-width="1.3"/></svg></div><div class="b" style="left:1232px;top:532.1px;width:61px"><svg width="12" height="19" viewBox="0 0 12 19" style="position:absolute;left:9.5px;top:9.5px"><path d="M1.2 1.2 H7.5 L10.8 4.5 V17.8 H1.2 Z" fill="none" stroke="#d6f0fb" stroke-width="2.2"/><path d="M3.5 8 H8.5 M3.5 11 H8.5 M3.5 14 H8.5" stroke="#c8ebf8" stroke-width="1.3"/></svg></div><div class="b" style="left:1298px;top:532.1px;width:52px"><svg width="12" height="19" viewBox="0 0 12 19" style="position:absolute;left:9.5px;top:9.5px"><path d="M1.2 1.2 H7.5 L10.8 4.5 V17.8 H1.2 Z" fill="none" stroke="#d6f0fb" stroke-width="2.2"/><path d="M3.5 8 H8.5 M3.5 11 H8.5 M3.5 14 H8.5" stroke="#c8ebf8" stroke-width="1.3"/></svg></div><div class="b" style="left:1355px;top:532.1px;width:57px"><svg width="12" height="19" viewBox="0 0 12 19" style="position:absolute;left:9.5px;top:9.5px"><path d="M1.2 1.2 H7.5 L10.8 4.5 V17.8 H1.2 Z" fill="none" stroke="#d6f0fb" stroke-width="2.2"/><path d="M3.5 8 H8.5 M3.5 11 H8.5 M3.5 14 H8.5" stroke="#c8ebf8" stroke-width="1.3"/></svg></div><div class="t" style="left:697.0px;top:546.1px;font-size:13px;color:#e8f7fd;transform:scaleX(0.914);font-weight:bold;">DGA</div><div class="t" style="left:763.0px;top:546.1px;font-size:13px;color:#e8f7fd;transform:scaleX(0.931);font-weight:bold;">DGA2</div><div class="t" style="left:836.0px;top:546.1px;font-size:13px;color:#e8f7fd;transform:scaleX(0.907);font-weight:bold;">DSA</div><div class="t" style="left:901.0px;top:546.1px;font-size:13px;color:#e8f7fd;transform:scaleX(0.886);font-weight:bold;">DIC</div><div class="t" style="left:961.0px;top:546.1px;font-size:13px;color:#e8f7fd;transform:scaleX(0.900);font-weight:bold;">TLÇ</div><div class="t" style="left:1023.0px;top:546.1px;font-size:13px;color:#e8f7fd;transform:scaleX(0.890);font-weight:bold;">DSTLÇ1</div><div class="t" style="left:1108.0px;top:546.1px;font-size:13px;color:#e8f7fd;transform:scaleX(0.890);font-weight:bold;">DSTLÇ2</div><div class="t" style="left:1192.0px;top:546.1px;font-size:13px;color:#e8f7fd;transform:scaleX(0.907);font-weight:bold;">RSD</div><div class="t" style="left:1257.0px;top:546.1px;font-size:13px;color:#e8f7fd;transform:scaleX(0.879);font-weight:bold;">DMP</div><div class="t" style="left:1323.0px;top:546.1px;font-size:13px;color:#e8f7fd;transform:scaleX(0.786);font-weight:bold;">DEI</div><div class="t" style="left:1380.0px;top:546.1px;font-size:13px;color:#e8f7fd;transform:scaleX(0.768);font-weight:bold;">DRE</div><div class="row" style="top:580.3px"></div><div class="ph" style="top:591.6px;line-height:0"><svg width="32" height="38" viewBox="0 0 32 38"><rect width="32" height="38" fill="#efe8ee"/><ellipse cx="16" cy="17" rx="7.5" ry="11" fill="#e8b0a8"/><path d="M8 13 C7 5 11 3 16 3 C21 3 25 5 24 12 C22 8 19 7 16 7 C13 7 10 8 8 13 Z" fill="#2a2024"/><ellipse cx="13" cy="15" rx="1.8" ry="1.1" fill="#6a4020"/><ellipse cx="19" cy="15" rx="1.8" ry="1.1" fill="#6a4020"/><path d="M0 38 V33 C2 30 7 29 11 28 L13 38 Z M32 38 V33 C30 30 25 29 21 28 L19 38 Z" fill="#0c0c0c"/><path d="M11 28 H21 L19 38 H13 Z" fill="#f0e4e8"/><path d="M14.5 30 H17.5 L18 38 H14 Z" fill="#d42030"/></svg></div><div class="t" style="left:291.0px;top:596.2px;font-size:17px;color:#8a8a8a;transform:scaleX(0.919);">0006</div><div class="t" style="left:388.2px;top:596.2px;font-size:17px;color:#8a8a8a;transform:scaleX(0.823);">Felipe Saraiva Assad</div><div class="b" style="left:672px;top:591.8px;width:62px"><svg width="12" height="19" viewBox="0 0 12 19" style="position:absolute;left:9.5px;top:9.5px"><path d="M1.2 1.2 H7.5 L10.8 4.5 V17.8 H1.2 Z" fill="none" stroke="#d6f0fb" stroke-width="2.2"/><path d="M3.5 8 H8.5 M3.5 11 H8.5 M3.5 14 H8.5" stroke="#c8ebf8" stroke-width="1.3"/></svg></div><div class="b" style="left:738px;top:591.8px;width:69px"><svg width="12" height="19" viewBox="0 0 12 19" style="position:absolute;left:9.5px;top:9.5px"><path d="M1.2 1.2 H7.5 L10.8 4.5 V17.8 H1.2 Z" fill="none" stroke="#d6f0fb" stroke-width="2.2"/><path d="M3.5 8 H8.5 M3.5 11 H8.5 M3.5 14 H8.5" stroke="#c8ebf8" stroke-width="1.3"/></svg></div><div class="b" style="left:811px;top:591.8px;width:60px"><svg width="12" height="19" viewBox="0 0 12 19" style="position:absolute;left:9.5px;top:9.5px"><path d="M1.2 1.2 H7.5 L10.8 4.5 V17.8 H1.2 Z" fill="none" stroke="#d6f0fb" stroke-width="2.2"/><path d="M3.5 8 H8.5 M3.5 11 H8.5 M3.5 14 H8.5" stroke="#c8ebf8" stroke-width="1.3"/></svg></div><div class="b" style="left:876px;top:591.8px;width:55px"><svg width="12" height="19" viewBox="0 0 12 19" style="position:absolute;left:9.5px;top:9.5px"><path d="M1.2 1.2 H7.5 L10.8 4.5 V17.8 H1.2 Z" fill="none" stroke="#d6f0fb" stroke-width="2.2"/><path d="M3.5 8 H8.5 M3.5 11 H8.5 M3.5 14 H8.5" stroke="#c8ebf8" stroke-width="1.3"/></svg></div><div class="b" style="left:936px;top:591.8px;width:58px"><svg width="12" height="19" viewBox="0 0 12 19" style="position:absolute;left:9.5px;top:9.5px"><path d="M1.2 1.2 H7.5 L10.8 4.5 V17.8 H1.2 Z" fill="none" stroke="#d6f0fb" stroke-width="2.2"/><path d="M3.5 8 H8.5 M3.5 11 H8.5 M3.5 14 H8.5" stroke="#c8ebf8" stroke-width="1.3"/></svg></div><div class="b" style="left:998px;top:591.8px;width:80px"><svg width="12" height="19" viewBox="0 0 12 19" style="position:absolute;left:9.5px;top:9.5px"><path d="M1.2 1.2 H7.5 L10.8 4.5 V17.8 H1.2 Z" fill="none" stroke="#d6f0fb" stroke-width="2.2"/><path d="M3.5 8 H8.5 M3.5 11 H8.5 M3.5 14 H8.5" stroke="#c8ebf8" stroke-width="1.3"/></svg></div><div class="b" style="left:1083px;top:591.8px;width:80px"><svg width="12" height="19" viewBox="0 0 12 19" style="position:absolute;left:9.5px;top:9.5px"><path d="M1.2 1.2 H7.5 L10.8 4.5 V17.8 H1.2 Z" fill="none" stroke="#d6f0fb" stroke-width="2.2"/><path d="M3.5 8 H8.5 M3.5 11 H8.5 M3.5 14 H8.5" stroke="#c8ebf8" stroke-width="1.3"/></svg></div><div class="b" style="left:1167px;top:591.8px;width:60px"><svg width="12" height="19" viewBox="0 0 12 19" style="position:absolute;left:9.5px;top:9.5px"><path d="M1.2 1.2 H7.5 L10.8 4.5 V17.8 H1.2 Z" fill="none" stroke="#d6f0fb" stroke-width="2.2"/><path d="M3.5 8 H8.5 M3.5 11 H8.5 M3.5 14 H8.5" stroke="#c8ebf8" stroke-width="1.3"/></svg></div><div class="b" style="left:1232px;top:591.8px;width:61px"><svg width="12" height="19" viewBox="0 0 12 19" style="position:absolute;left:9.5px;top:9.5px"><path d="M1.2 1.2 H7.5 L10.8 4.5 V17.8 H1.2 Z" fill="none" stroke="#d6f0fb" stroke-width="2.2"/><path d="M3.5 8 H8.5 M3.5 11 H8.5 M3.5 14 H8.5" stroke="#c8ebf8" stroke-width="1.3"/></svg></div><div class="b" style="left:1298px;top:591.8px;width:52px"><svg width="12" height="19" viewBox="0 0 12 19" style="position:absolute;left:9.5px;top:9.5px"><path d="M1.2 1.2 H7.5 L10.8 4.5 V17.8 H1.2 Z" fill="none" stroke="#d6f0fb" stroke-width="2.2"/><path d="M3.5 8 H8.5 M3.5 11 H8.5 M3.5 14 H8.5" stroke="#c8ebf8" stroke-width="1.3"/></svg></div><div class="b" style="left:1355px;top:591.8px;width:57px"><svg width="12" height="19" viewBox="0 0 12 19" style="position:absolute;left:9.5px;top:9.5px"><path d="M1.2 1.2 H7.5 L10.8 4.5 V17.8 H1.2 Z" fill="none" stroke="#d6f0fb" stroke-width="2.2"/><path d="M3.5 8 H8.5 M3.5 11 H8.5 M3.5 14 H8.5" stroke="#c8ebf8" stroke-width="1.3"/></svg></div><div class="t" style="left:697.0px;top:605.8px;font-size:13px;color:#e8f7fd;transform:scaleX(0.914);font-weight:bold;">DGA</div><div class="t" style="left:763.0px;top:605.8px;font-size:13px;color:#e8f7fd;transform:scaleX(0.931);font-weight:bold;">DGA2</div><div class="t" style="left:836.0px;top:605.8px;font-size:13px;color:#e8f7fd;transform:scaleX(0.907);font-weight:bold;">DSA</div><div class="t" style="left:901.0px;top:605.8px;font-size:13px;color:#e8f7fd;transform:scaleX(0.886);font-weight:bold;">DIC</div><div class="t" style="left:961.0px;top:605.8px;font-size:13px;color:#e8f7fd;transform:scaleX(0.900);font-weight:bold;">TLÇ</div><div class="t" style="left:1023.0px;top:605.8px;font-size:13px;color:#e8f7fd;transform:scaleX(0.890);font-weight:bold;">DSTLÇ1</div><div class="t" style="left:1108.0px;top:605.8px;font-size:13px;color:#e8f7fd;transform:scaleX(0.890);font-weight:bold;">DSTLÇ2</div><div class="t" style="left:1192.0px;top:605.8px;font-size:13px;color:#e8f7fd;transform:scaleX(0.907);font-weight:bold;">RSD</div><div class="t" style="left:1257.0px;top:605.8px;font-size:13px;color:#e8f7fd;transform:scaleX(0.879);font-weight:bold;">DMP</div><div class="t" style="left:1323.0px;top:605.8px;font-size:13px;color:#e8f7fd;transform:scaleX(0.786);font-weight:bold;">DEI</div><div class="t" style="left:1380.0px;top:605.8px;font-size:13px;color:#e8f7fd;transform:scaleX(0.768);font-weight:bold;">DRE</div><div class="row" style="top:640.0px"></div><div class="ph" style="top:651.3px;line-height:0"><svg width="32" height="38" viewBox="0 0 32 38"><rect width="32" height="38" fill="#d4d7db"/><ellipse cx="16" cy="17" rx="8.5" ry="11.5" fill="#dcb4a4"/><path d="M8 20 C9 26 12 29 16 29 C20 29 23 26 24 20 C22 24 20 25 16 25 C12 25 10 24 8 20 Z" fill="#6a5048"/><path d="M7 14 C6 5 11 2 16 2 C21 2 26 5 25 13 C23 8 20 7 16 7 C12 7 9 9 7 14 Z" fill="#1e1c1c"/><path d="M0 38 V32 C3 29 8 28 11 28 C13 31 19 31 21 28 C24 28 29 29 32 32 V38 Z" fill="#3a302a"/><path d="M12 30 H20 L18 38 H14 Z" fill="#d8a0a0"/></svg></div><div class="t" style="left:291.0px;top:655.9px;font-size:17px;color:#8a8a8a;transform:scaleX(0.919);">0008</div><div class="t" style="left:389.0px;top:655.9px;font-size:17px;color:#8a8a8a;transform:scaleX(0.831);">Alisson Galvan Bezerra</div><div class="b" style="left:672px;top:651.5px;width:62px"><svg width="12" height="19" viewBox="0 0 12 19" style="position:absolute;left:9.5px;top:9.5px"><path d="M1.2 1.2 H7.5 L10.8 4.5 V17.8 H1.2 Z" fill="none" stroke="#d6f0fb" stroke-width="2.2"/><path d="M3.5 8 H8.5 M3.5 11 H8.5 M3.5 14 H8.5" stroke="#c8ebf8" stroke-width="1.3"/></svg></div><div class="b" style="left:738px;top:651.5px;width:69px"><svg width="12" height="19" viewBox="0 0 12 19" style="position:absolute;left:9.5px;top:9.5px"><path d="M1.2 1.2 H7.5 L10.8 4.5 V17.8 H1.2 Z" fill="none" stroke="#d6f0fb" stroke-width="2.2"/><path d="M3.5 8 H8.5 M3.5 11 H8.5 M3.5 14 H8.5" stroke="#c8ebf8" stroke-width="1.3"/></svg></div><div class="b" style="left:811px;top:651.5px;width:60px"><svg width="12" height="19" viewBox="0 0 12 19" style="position:absolute;left:9.5px;top:9.5px"><path d="M1.2 1.2 H7.5 L10.8 4.5 V17.8 H1.2 Z" fill="none" stroke="#d6f0fb" stroke-width="2.2"/><path d="M3.5 8 H8.5 M3.5 11 H8.5 M3.5 14 H8.5" stroke="#c8ebf8" stroke-width="1.3"/></svg></div><div class="b" style="left:876px;top:651.5px;width:55px"><svg width="12" height="19" viewBox="0 0 12 19" style="position:absolute;left:9.5px;top:9.5px"><path d="M1.2 1.2 H7.5 L10.8 4.5 V17.8 H1.2 Z" fill="none" stroke="#d6f0fb" stroke-width="2.2"/><path d="M3.5 8 H8.5 M3.5 11 H8.5 M3.5 14 H8.5" stroke="#c8ebf8" stroke-width="1.3"/></svg></div><div class="b" style="left:936px;top:651.5px;width:58px"><svg width="12" height="19" viewBox="0 0 12 19" style="position:absolute;left:9.5px;top:9.5px"><path d="M1.2 1.2 H7.5 L10.8 4.5 V17.8 H1.2 Z" fill="none" stroke="#d6f0fb" stroke-width="2.2"/><path d="M3.5 8 H8.5 M3.5 11 H8.5 M3.5 14 H8.5" stroke="#c8ebf8" stroke-width="1.3"/></svg></div><div class="b" style="left:998px;top:651.5px;width:80px"><svg width="12" height="19" viewBox="0 0 12 19" style="position:absolute;left:9.5px;top:9.5px"><path d="M1.2 1.2 H7.5 L10.8 4.5 V17.8 H1.2 Z" fill="none" stroke="#d6f0fb" stroke-width="2.2"/><path d="M3.5 8 H8.5 M3.5 11 H8.5 M3.5 14 H8.5" stroke="#c8ebf8" stroke-width="1.3"/></svg></div><div class="b" style="left:1083px;top:651.5px;width:80px"><svg width="12" height="19" viewBox="0 0 12 19" style="position:absolute;left:9.5px;top:9.5px"><path d="M1.2 1.2 H7.5 L10.8 4.5 V17.8 H1.2 Z" fill="none" stroke="#d6f0fb" stroke-width="2.2"/><path d="M3.5 8 H8.5 M3.5 11 H8.5 M3.5 14 H8.5" stroke="#c8ebf8" stroke-width="1.3"/></svg></div><div class="b" style="left:1167px;top:651.5px;width:60px"><svg width="12" height="19" viewBox="0 0 12 19" style="position:absolute;left:9.5px;top:9.5px"><path d="M1.2 1.2 H7.5 L10.8 4.5 V17.8 H1.2 Z" fill="none" stroke="#d6f0fb" stroke-width="2.2"/><path d="M3.5 8 H8.5 M3.5 11 H8.5 M3.5 14 H8.5" stroke="#c8ebf8" stroke-width="1.3"/></svg></div><div class="b" style="left:1232px;top:651.5px;width:61px"><svg width="12" height="19" viewBox="0 0 12 19" style="position:absolute;left:9.5px;top:9.5px"><path d="M1.2 1.2 H7.5 L10.8 4.5 V17.8 H1.2 Z" fill="none" stroke="#d6f0fb" stroke-width="2.2"/><path d="M3.5 8 H8.5 M3.5 11 H8.5 M3.5 14 H8.5" stroke="#c8ebf8" stroke-width="1.3"/></svg></div><div class="b" style="left:1298px;top:651.5px;width:52px"><svg width="12" height="19" viewBox="0 0 12 19" style="position:absolute;left:9.5px;top:9.5px"><path d="M1.2 1.2 H7.5 L10.8 4.5 V17.8 H1.2 Z" fill="none" stroke="#d6f0fb" stroke-width="2.2"/><path d="M3.5 8 H8.5 M3.5 11 H8.5 M3.5 14 H8.5" stroke="#c8ebf8" stroke-width="1.3"/></svg></div><div class="b" style="left:1355px;top:651.5px;width:57px"><svg width="12" height="19" viewBox="0 0 12 19" style="position:absolute;left:9.5px;top:9.5px"><path d="M1.2 1.2 H7.5 L10.8 4.5 V17.8 H1.2 Z" fill="none" stroke="#d6f0fb" stroke-width="2.2"/><path d="M3.5 8 H8.5 M3.5 11 H8.5 M3.5 14 H8.5" stroke="#c8ebf8" stroke-width="1.3"/></svg></div><div class="t" style="left:697.0px;top:665.5px;font-size:13px;color:#e8f7fd;transform:scaleX(0.914);font-weight:bold;">DGA</div><div class="t" style="left:763.0px;top:665.5px;font-size:13px;color:#e8f7fd;transform:scaleX(0.931);font-weight:bold;">DGA2</div><div class="t" style="left:836.0px;top:665.5px;font-size:13px;color:#e8f7fd;transform:scaleX(0.907);font-weight:bold;">DSA</div><div class="t" style="left:901.0px;top:665.5px;font-size:13px;color:#e8f7fd;transform:scaleX(0.886);font-weight:bold;">DIC</div><div class="t" style="left:961.0px;top:665.5px;font-size:13px;color:#e8f7fd;transform:scaleX(0.900);font-weight:bold;">TLÇ</div><div class="t" style="left:1023.0px;top:665.5px;font-size:13px;color:#e8f7fd;transform:scaleX(0.890);font-weight:bold;">DSTLÇ1</div><div class="t" style="left:1108.0px;top:665.5px;font-size:13px;color:#e8f7fd;transform:scaleX(0.890);font-weight:bold;">DSTLÇ2</div><div class="t" style="left:1192.0px;top:665.5px;font-size:13px;color:#e8f7fd;transform:scaleX(0.907);font-weight:bold;">RSD</div><div class="t" style="left:1257.0px;top:665.5px;font-size:13px;color:#e8f7fd;transform:scaleX(0.879);font-weight:bold;">DMP</div><div class="t" style="left:1323.0px;top:665.5px;font-size:13px;color:#e8f7fd;transform:scaleX(0.786);font-weight:bold;">DEI</div><div class="t" style="left:1380.0px;top:665.5px;font-size:13px;color:#e8f7fd;transform:scaleX(0.768);font-weight:bold;">DRE</div><div class="row" style="top:699.7px"></div><div class="ph" style="top:711.0px;line-height:0"><svg width="32" height="38" viewBox="0 0 32 38"><rect width="32" height="38" fill="#fff"/><path d="M8 31 C10 29 12 28 14 28 H18 C20 28 22 29 24 31 Z" fill="#f0c0a0"/><rect x="12.5" y="20" width="7" height="10" fill="#f2c6a4"/><ellipse cx="16" cy="14" rx="6.5" ry="9" fill="#f5d0b4"/><path d="M9 12 C8 4 12 2 16 2 C20 2 24 4 23 12 C22 8 19 6 16 6 C13 6 10 8 9 12 Z" fill="#141010"/><path d="M1 38 V33 C3 30 7 29 10 29 C12 33 20 33 22 29 C25 29 29 30 31 33 V38 Z" fill="#0a0a0a"/></svg></div><div class="t" style="left:291.0px;top:715.6px;font-size:17px;color:#8a8a8a;transform:scaleX(0.919);">0009</div><div class="t" style="left:389.0px;top:715.6px;font-size:17px;color:#8a8a8a;transform:scaleX(0.844);">Tatiana de Oliveira Marques</div><div class="b" style="left:672px;top:711.2px;width:62px"><svg width="12" height="19" viewBox="0 0 12 19" style="position:absolute;left:9.5px;top:9.5px"><path d="M1.2 1.2 H7.5 L10.8 4.5 V17.8 H1.2 Z" fill="none" stroke="#d6f0fb" stroke-width="2.2"/><path d="M3.5 8 H8.5 M3.5 11 H8.5 M3.5 14 H8.5" stroke="#c8ebf8" stroke-width="1.3"/></svg></div><div class="b" style="left:738px;top:711.2px;width:69px"><svg width="12" height="19" viewBox="0 0 12 19" style="position:absolute;left:9.5px;top:9.5px"><path d="M1.2 1.2 H7.5 L10.8 4.5 V17.8 H1.2 Z" fill="none" stroke="#d6f0fb" stroke-width="2.2"/><path d="M3.5 8 H8.5 M3.5 11 H8.5 M3.5 14 H8.5" stroke="#c8ebf8" stroke-width="1.3"/></svg></div><div class="b" style="left:811px;top:711.2px;width:60px"><svg width="12" height="19" viewBox="0 0 12 19" style="position:absolute;left:9.5px;top:9.5px"><path d="M1.2 1.2 H7.5 L10.8 4.5 V17.8 H1.2 Z" fill="none" stroke="#d6f0fb" stroke-width="2.2"/><path d="M3.5 8 H8.5 M3.5 11 H8.5 M3.5 14 H8.5" stroke="#c8ebf8" stroke-width="1.3"/></svg></div><div class="b" style="left:876px;top:711.2px;width:55px"><svg width="12" height="19" viewBox="0 0 12 19" style="position:absolute;left:9.5px;top:9.5px"><path d="M1.2 1.2 H7.5 L10.8 4.5 V17.8 H1.2 Z" fill="none" stroke="#d6f0fb" stroke-width="2.2"/><path d="M3.5 8 H8.5 M3.5 11 H8.5 M3.5 14 H8.5" stroke="#c8ebf8" stroke-width="1.3"/></svg></div><div class="b" style="left:936px;top:711.2px;width:58px"><svg width="12" height="19" viewBox="0 0 12 19" style="position:absolute;left:9.5px;top:9.5px"><path d="M1.2 1.2 H7.5 L10.8 4.5 V17.8 H1.2 Z" fill="none" stroke="#d6f0fb" stroke-width="2.2"/><path d="M3.5 8 H8.5 M3.5 11 H8.5 M3.5 14 H8.5" stroke="#c8ebf8" stroke-width="1.3"/></svg></div><div class="b" style="left:998px;top:711.2px;width:80px"><svg width="12" height="19" viewBox="0 0 12 19" style="position:absolute;left:9.5px;top:9.5px"><path d="M1.2 1.2 H7.5 L10.8 4.5 V17.8 H1.2 Z" fill="none" stroke="#d6f0fb" stroke-width="2.2"/><path d="M3.5 8 H8.5 M3.5 11 H8.5 M3.5 14 H8.5" stroke="#c8ebf8" stroke-width="1.3"/></svg></div><div class="b" style="left:1083px;top:711.2px;width:80px"><svg width="12" height="19" viewBox="0 0 12 19" style="position:absolute;left:9.5px;top:9.5px"><path d="M1.2 1.2 H7.5 L10.8 4.5 V17.8 H1.2 Z" fill="none" stroke="#d6f0fb" stroke-width="2.2"/><path d="M3.5 8 H8.5 M3.5 11 H8.5 M3.5 14 H8.5" stroke="#c8ebf8" stroke-width="1.3"/></svg></div><div class="b" style="left:1167px;top:711.2px;width:60px"><svg width="12" height="19" viewBox="0 0 12 19" style="position:absolute;left:9.5px;top:9.5px"><path d="M1.2 1.2 H7.5 L10.8 4.5 V17.8 H1.2 Z" fill="none" stroke="#d6f0fb" stroke-width="2.2"/><path d="M3.5 8 H8.5 M3.5 11 H8.5 M3.5 14 H8.5" stroke="#c8ebf8" stroke-width="1.3"/></svg></div><div class="b" style="left:1232px;top:711.2px;width:61px"><svg width="12" height="19" viewBox="0 0 12 19" style="position:absolute;left:9.5px;top:9.5px"><path d="M1.2 1.2 H7.5 L10.8 4.5 V17.8 H1.2 Z" fill="none" stroke="#d6f0fb" stroke-width="2.2"/><path d="M3.5 8 H8.5 M3.5 11 H8.5 M3.5 14 H8.5" stroke="#c8ebf8" stroke-width="1.3"/></svg></div><div class="b" style="left:1298px;top:711.2px;width:52px"><svg width="12" height="19" viewBox="0 0 12 19" style="position:absolute;left:9.5px;top:9.5px"><path d="M1.2 1.2 H7.5 L10.8 4.5 V17.8 H1.2 Z" fill="none" stroke="#d6f0fb" stroke-width="2.2"/><path d="M3.5 8 H8.5 M3.5 11 H8.5 M3.5 14 H8.5" stroke="#c8ebf8" stroke-width="1.3"/></svg></div><div class="b" style="left:1355px;top:711.2px;width:57px"><svg width="12" height="19" viewBox="0 0 12 19" style="position:absolute;left:9.5px;top:9.5px"><path d="M1.2 1.2 H7.5 L10.8 4.5 V17.8 H1.2 Z" fill="none" stroke="#d6f0fb" stroke-width="2.2"/><path d="M3.5 8 H8.5 M3.5 11 H8.5 M3.5 14 H8.5" stroke="#c8ebf8" stroke-width="1.3"/></svg></div><div class="t" style="left:697.0px;top:725.2px;font-size:13px;color:#e8f7fd;transform:scaleX(0.914);font-weight:bold;">DGA</div><div class="t" style="left:763.0px;top:725.2px;font-size:13px;color:#e8f7fd;transform:scaleX(0.931);font-weight:bold;">DGA2</div><div class="t" style="left:836.0px;top:725.2px;font-size:13px;color:#e8f7fd;transform:scaleX(0.907);font-weight:bold;">DSA</div><div class="t" style="left:901.0px;top:725.2px;font-size:13px;color:#e8f7fd;transform:scaleX(0.886);font-weight:bold;">DIC</div><div class="t" style="left:961.0px;top:725.2px;font-size:13px;color:#e8f7fd;transform:scaleX(0.900);font-weight:bold;">TLÇ</div><div class="t" style="left:1023.0px;top:725.2px;font-size:13px;color:#e8f7fd;transform:scaleX(0.890);font-weight:bold;">DSTLÇ1</div><div class="t" style="left:1108.0px;top:725.2px;font-size:13px;color:#e8f7fd;transform:scaleX(0.890);font-weight:bold;">DSTLÇ2</div><div class="t" style="left:1192.0px;top:725.2px;font-size:13px;color:#e8f7fd;transform:scaleX(0.907);font-weight:bold;">RSD</div><div class="t" style="left:1257.0px;top:725.2px;font-size:13px;color:#e8f7fd;transform:scaleX(0.879);font-weight:bold;">DMP</div><div class="t" style="left:1323.0px;top:725.2px;font-size:13px;color:#e8f7fd;transform:scaleX(0.786);font-weight:bold;">DEI</div><div class="t" style="left:1380.0px;top:725.2px;font-size:13px;color:#e8f7fd;transform:scaleX(0.768);font-weight:bold;">DRE</div><div class="row" style="top:759.4px"></div><div class="ph" style="top:770.7px;line-height:0"><svg width="32" height="37" viewBox="0 0 32 37"><rect width="32" height="37" fill="#b6bedb"/><path d="M16 4.5 C11.5 4.5 10 8 10 12 C10 16 11 19 12.5 21.5 C12.5 25 11.5 28.5 8 30.5 C5 32 2 32.5 0 33.5 V37 H32 V33.5 C30 32.5 27 32 24 30.5 C20.5 28.5 19.5 25 19.5 21.5 C21 19 22 16 22 12 C22 8 20.5 4.5 16 4.5 Z" fill="#fcfdfe"/></svg></div><div class="t" style="left:291.0px;top:775.3px;font-size:17px;color:#8a8a8a;transform:scaleX(0.919);">0010</div><div class="t" style="left:388.1px;top:775.3px;font-size:17px;color:#8a8a8a;transform:scaleX(0.859);">Renata Oliveira Andrade</div><div class="b" style="left:672px;top:770.9px;width:62px"><svg width="12" height="19" viewBox="0 0 12 19" style="position:absolute;left:9.5px;top:9.5px"><path d="M1.2 1.2 H7.5 L10.8 4.5 V17.8 H1.2 Z" fill="none" stroke="#d6f0fb" stroke-width="2.2"/><path d="M3.5 8 H8.5 M3.5 11 H8.5 M3.5 14 H8.5" stroke="#c8ebf8" stroke-width="1.3"/></svg></div><div class="b" style="left:738px;top:770.9px;width:69px"><svg width="12" height="19" viewBox="0 0 12 19" style="position:absolute;left:9.5px;top:9.5px"><path d="M1.2 1.2 H7.5 L10.8 4.5 V17.8 H1.2 Z" fill="none" stroke="#d6f0fb" stroke-width="2.2"/><path d="M3.5 8 H8.5 M3.5 11 H8.5 M3.5 14 H8.5" stroke="#c8ebf8" stroke-width="1.3"/></svg></div><div class="b" style="left:811px;top:770.9px;width:60px"><svg width="12" height="19" viewBox="0 0 12 19" style="position:absolute;left:9.5px;top:9.5px"><path d="M1.2 1.2 H7.5 L10.8 4.5 V17.8 H1.2 Z" fill="none" stroke="#d6f0fb" stroke-width="2.2"/><path d="M3.5 8 H8.5 M3.5 11 H8.5 M3.5 14 H8.5" stroke="#c8ebf8" stroke-width="1.3"/></svg></div><div class="b" style="left:876px;top:770.9px;width:55px"><svg width="12" height="19" viewBox="0 0 12 19" style="position:absolute;left:9.5px;top:9.5px"><path d="M1.2 1.2 H7.5 L10.8 4.5 V17.8 H1.2 Z" fill="none" stroke="#d6f0fb" stroke-width="2.2"/><path d="M3.5 8 H8.5 M3.5 11 H8.5 M3.5 14 H8.5" stroke="#c8ebf8" stroke-width="1.3"/></svg></div><div class="b" style="left:936px;top:770.9px;width:58px"><svg width="12" height="19" viewBox="0 0 12 19" style="position:absolute;left:9.5px;top:9.5px"><path d="M1.2 1.2 H7.5 L10.8 4.5 V17.8 H1.2 Z" fill="none" stroke="#d6f0fb" stroke-width="2.2"/><path d="M3.5 8 H8.5 M3.5 11 H8.5 M3.5 14 H8.5" stroke="#c8ebf8" stroke-width="1.3"/></svg></div><div class="b" style="left:998px;top:770.9px;width:80px"><svg width="12" height="19" viewBox="0 0 12 19" style="position:absolute;left:9.5px;top:9.5px"><path d="M1.2 1.2 H7.5 L10.8 4.5 V17.8 H1.2 Z" fill="none" stroke="#d6f0fb" stroke-width="2.2"/><path d="M3.5 8 H8.5 M3.5 11 H8.5 M3.5 14 H8.5" stroke="#c8ebf8" stroke-width="1.3"/></svg></div><div class="b" style="left:1083px;top:770.9px;width:80px"><svg width="12" height="19" viewBox="0 0 12 19" style="position:absolute;left:9.5px;top:9.5px"><path d="M1.2 1.2 H7.5 L10.8 4.5 V17.8 H1.2 Z" fill="none" stroke="#d6f0fb" stroke-width="2.2"/><path d="M3.5 8 H8.5 M3.5 11 H8.5 M3.5 14 H8.5" stroke="#c8ebf8" stroke-width="1.3"/></svg></div><div class="b" style="left:1167px;top:770.9px;width:60px"><svg width="12" height="19" viewBox="0 0 12 19" style="position:absolute;left:9.5px;top:9.5px"><path d="M1.2 1.2 H7.5 L10.8 4.5 V17.8 H1.2 Z" fill="none" stroke="#d6f0fb" stroke-width="2.2"/><path d="M3.5 8 H8.5 M3.5 11 H8.5 M3.5 14 H8.5" stroke="#c8ebf8" stroke-width="1.3"/></svg></div><div class="b" style="left:1232px;top:770.9px;width:61px"><svg width="12" height="19" viewBox="0 0 12 19" style="position:absolute;left:9.5px;top:9.5px"><path d="M1.2 1.2 H7.5 L10.8 4.5 V17.8 H1.2 Z" fill="none" stroke="#d6f0fb" stroke-width="2.2"/><path d="M3.5 8 H8.5 M3.5 11 H8.5 M3.5 14 H8.5" stroke="#c8ebf8" stroke-width="1.3"/></svg></div><div class="b" style="left:1298px;top:770.9px;width:52px"><svg width="12" height="19" viewBox="0 0 12 19" style="position:absolute;left:9.5px;top:9.5px"><path d="M1.2 1.2 H7.5 L10.8 4.5 V17.8 H1.2 Z" fill="none" stroke="#d6f0fb" stroke-width="2.2"/><path d="M3.5 8 H8.5 M3.5 11 H8.5 M3.5 14 H8.5" stroke="#c8ebf8" stroke-width="1.3"/></svg></div><div class="b" style="left:1355px;top:770.9px;width:57px"><svg width="12" height="19" viewBox="0 0 12 19" style="position:absolute;left:9.5px;top:9.5px"><path d="M1.2 1.2 H7.5 L10.8 4.5 V17.8 H1.2 Z" fill="none" stroke="#d6f0fb" stroke-width="2.2"/><path d="M3.5 8 H8.5 M3.5 11 H8.5 M3.5 14 H8.5" stroke="#c8ebf8" stroke-width="1.3"/></svg></div><div class="t" style="left:697.0px;top:784.9px;font-size:13px;color:#e8f7fd;transform:scaleX(0.914);font-weight:bold;">DGA</div><div class="t" style="left:763.0px;top:784.9px;font-size:13px;color:#e8f7fd;transform:scaleX(0.931);font-weight:bold;">DGA2</div><div class="t" style="left:836.0px;top:784.9px;font-size:13px;color:#e8f7fd;transform:scaleX(0.907);font-weight:bold;">DSA</div><div class="t" style="left:901.0px;top:784.9px;font-size:13px;color:#e8f7fd;transform:scaleX(0.886);font-weight:bold;">DIC</div><div class="t" style="left:961.0px;top:784.9px;font-size:13px;color:#e8f7fd;transform:scaleX(0.900);font-weight:bold;">TLÇ</div><div class="t" style="left:1023.0px;top:784.9px;font-size:13px;color:#e8f7fd;transform:scaleX(0.890);font-weight:bold;">DSTLÇ1</div><div class="t" style="left:1108.0px;top:784.9px;font-size:13px;color:#e8f7fd;transform:scaleX(0.890);font-weight:bold;">DSTLÇ2</div><div class="t" style="left:1192.0px;top:784.9px;font-size:13px;color:#e8f7fd;transform:scaleX(0.907);font-weight:bold;">RSD</div><div class="t" style="left:1257.0px;top:784.9px;font-size:13px;color:#e8f7fd;transform:scaleX(0.879);font-weight:bold;">DMP</div><div class="t" style="left:1323.0px;top:784.9px;font-size:13px;color:#e8f7fd;transform:scaleX(0.786);font-weight:bold;">DEI</div><div class="t" style="left:1380.0px;top:784.9px;font-size:13px;color:#e8f7fd;transform:scaleX(0.768);font-weight:bold;">DRE</div><div class="row" style="top:819.1px"></div><div class="ph" style="top:830.4px;line-height:0"><svg width="32" height="37" viewBox="0 0 32 37"><rect width="32" height="37" fill="#b6bedb"/><path d="M16 4.5 C11.5 4.5 10 8 10 12 C10 16 11 19 12.5 21.5 C12.5 25 11.5 28.5 8 30.5 C5 32 2 32.5 0 33.5 V37 H32 V33.5 C30 32.5 27 32 24 30.5 C20.5 28.5 19.5 25 19.5 21.5 C21 19 22 16 22 12 C22 8 20.5 4.5 16 4.5 Z" fill="#fcfdfe"/></svg></div><div class="t" style="left:291.0px;top:835.0px;font-size:17px;color:#8a8a8a;transform:scaleX(0.944);">0011</div><div class="t" style="left:388.2px;top:835.0px;font-size:17px;color:#8a8a8a;transform:scaleX(0.829);">Leandro Pereira dos Santos</div><div class="b" style="left:672px;top:830.6px;width:62px"><svg width="12" height="19" viewBox="0 0 12 19" style="position:absolute;left:9.5px;top:9.5px"><path d="M1.2 1.2 H7.5 L10.8 4.5 V17.8 H1.2 Z" fill="none" stroke="#d6f0fb" stroke-width="2.2"/><path d="M3.5 8 H8.5 M3.5 11 H8.5 M3.5 14 H8.5" stroke="#c8ebf8" stroke-width="1.3"/></svg></div><div class="b" style="left:738px;top:830.6px;width:69px"><svg width="12" height="19" viewBox="0 0 12 19" style="position:absolute;left:9.5px;top:9.5px"><path d="M1.2 1.2 H7.5 L10.8 4.5 V17.8 H1.2 Z" fill="none" stroke="#d6f0fb" stroke-width="2.2"/><path d="M3.5 8 H8.5 M3.5 11 H8.5 M3.5 14 H8.5" stroke="#c8ebf8" stroke-width="1.3"/></svg></div><div class="b" style="left:811px;top:830.6px;width:60px"><svg width="12" height="19" viewBox="0 0 12 19" style="position:absolute;left:9.5px;top:9.5px"><path d="M1.2 1.2 H7.5 L10.8 4.5 V17.8 H1.2 Z" fill="none" stroke="#d6f0fb" stroke-width="2.2"/><path d="M3.5 8 H8.5 M3.5 11 H8.5 M3.5 14 H8.5" stroke="#c8ebf8" stroke-width="1.3"/></svg></div><div class="b" style="left:876px;top:830.6px;width:55px"><svg width="12" height="19" viewBox="0 0 12 19" style="position:absolute;left:9.5px;top:9.5px"><path d="M1.2 1.2 H7.5 L10.8 4.5 V17.8 H1.2 Z" fill="none" stroke="#d6f0fb" stroke-width="2.2"/><path d="M3.5 8 H8.5 M3.5 11 H8.5 M3.5 14 H8.5" stroke="#c8ebf8" stroke-width="1.3"/></svg></div><div class="b" style="left:936px;top:830.6px;width:58px"><svg width="12" height="19" viewBox="0 0 12 19" style="position:absolute;left:9.5px;top:9.5px"><path d="M1.2 1.2 H7.5 L10.8 4.5 V17.8 H1.2 Z" fill="none" stroke="#d6f0fb" stroke-width="2.2"/><path d="M3.5 8 H8.5 M3.5 11 H8.5 M3.5 14 H8.5" stroke="#c8ebf8" stroke-width="1.3"/></svg></div><div class="b" style="left:998px;top:830.6px;width:80px"><svg width="12" height="19" viewBox="0 0 12 19" style="position:absolute;left:9.5px;top:9.5px"><path d="M1.2 1.2 H7.5 L10.8 4.5 V17.8 H1.2 Z" fill="none" stroke="#d6f0fb" stroke-width="2.2"/><path d="M3.5 8 H8.5 M3.5 11 H8.5 M3.5 14 H8.5" stroke="#c8ebf8" stroke-width="1.3"/></svg></div><div class="b" style="left:1083px;top:830.6px;width:80px"><svg width="12" height="19" viewBox="0 0 12 19" style="position:absolute;left:9.5px;top:9.5px"><path d="M1.2 1.2 H7.5 L10.8 4.5 V17.8 H1.2 Z" fill="none" stroke="#d6f0fb" stroke-width="2.2"/><path d="M3.5 8 H8.5 M3.5 11 H8.5 M3.5 14 H8.5" stroke="#c8ebf8" stroke-width="1.3"/></svg></div><div class="b" style="left:1167px;top:830.6px;width:60px"><svg width="12" height="19" viewBox="0 0 12 19" style="position:absolute;left:9.5px;top:9.5px"><path d="M1.2 1.2 H7.5 L10.8 4.5 V17.8 H1.2 Z" fill="none" stroke="#d6f0fb" stroke-width="2.2"/><path d="M3.5 8 H8.5 M3.5 11 H8.5 M3.5 14 H8.5" stroke="#c8ebf8" stroke-width="1.3"/></svg></div><div class="b" style="left:1232px;top:830.6px;width:61px"><svg width="12" height="19" viewBox="0 0 12 19" style="position:absolute;left:9.5px;top:9.5px"><path d="M1.2 1.2 H7.5 L10.8 4.5 V17.8 H1.2 Z" fill="none" stroke="#d6f0fb" stroke-width="2.2"/><path d="M3.5 8 H8.5 M3.5 11 H8.5 M3.5 14 H8.5" stroke="#c8ebf8" stroke-width="1.3"/></svg></div><div class="b" style="left:1298px;top:830.6px;width:52px"><svg width="12" height="19" viewBox="0 0 12 19" style="position:absolute;left:9.5px;top:9.5px"><path d="M1.2 1.2 H7.5 L10.8 4.5 V17.8 H1.2 Z" fill="none" stroke="#d6f0fb" stroke-width="2.2"/><path d="M3.5 8 H8.5 M3.5 11 H8.5 M3.5 14 H8.5" stroke="#c8ebf8" stroke-width="1.3"/></svg></div><div class="b" style="left:1355px;top:830.6px;width:57px"><svg width="12" height="19" viewBox="0 0 12 19" style="position:absolute;left:9.5px;top:9.5px"><path d="M1.2 1.2 H7.5 L10.8 4.5 V17.8 H1.2 Z" fill="none" stroke="#d6f0fb" stroke-width="2.2"/><path d="M3.5 8 H8.5 M3.5 11 H8.5 M3.5 14 H8.5" stroke="#c8ebf8" stroke-width="1.3"/></svg></div><div class="t" style="left:697.0px;top:844.6px;font-size:13px;color:#e8f7fd;transform:scaleX(0.914);font-weight:bold;">DGA</div><div class="t" style="left:763.0px;top:844.6px;font-size:13px;color:#e8f7fd;transform:scaleX(0.931);font-weight:bold;">DGA2</div><div class="t" style="left:836.0px;top:844.6px;font-size:13px;color:#e8f7fd;transform:scaleX(0.907);font-weight:bold;">DSA</div><div class="t" style="left:901.0px;top:844.6px;font-size:13px;color:#e8f7fd;transform:scaleX(0.886);font-weight:bold;">DIC</div><div class="t" style="left:961.0px;top:844.6px;font-size:13px;color:#e8f7fd;transform:scaleX(0.900);font-weight:bold;">TLÇ</div><div class="t" style="left:1023.0px;top:844.6px;font-size:13px;color:#e8f7fd;transform:scaleX(0.890);font-weight:bold;">DSTLÇ1</div><div class="t" style="left:1108.0px;top:844.6px;font-size:13px;color:#e8f7fd;transform:scaleX(0.890);font-weight:bold;">DSTLÇ2</div><div class="t" style="left:1192.0px;top:844.6px;font-size:13px;color:#e8f7fd;transform:scaleX(0.907);font-weight:bold;">RSD</div><div class="t" style="left:1257.0px;top:844.6px;font-size:13px;color:#e8f7fd;transform:scaleX(0.879);font-weight:bold;">DMP</div><div class="t" style="left:1323.0px;top:844.6px;font-size:13px;color:#e8f7fd;transform:scaleX(0.786);font-weight:bold;">DEI</div><div class="t" style="left:1380.0px;top:844.6px;font-size:13px;color:#e8f7fd;transform:scaleX(0.768);font-weight:bold;">DRE</div></div></div><div id="w2"><div id="c"><div class="abs" style="left:-20px;top:-20px;width:1640px;height:92px;background:#0d212c"></div><div class="abs" style="left:-20px;top:71px;width:1640px;height:4px;background:#03070a"></div><div class="abs" style="left:-20px;top:75px;width:1640px;height:4px;background:#f8f8f8"></div><div class="abs" style="left:17px;top:32px;width:20px;height:17px;background:#03080e;border-radius:4px"></div><div class="abs" style="left:19px;top:35px;width:16px;height:13px;background:linear-gradient(#dcdce4 0 4px,#8e9494 4px 9px,#d4dcdc 9px)"></div><div class="t" style="left:52.5px;top:25.5px;font-size:29px;color:#d4a65f;transform:scaleX(0.847);">ADM</div><div class="t" style="left:110.2px;top:25.5px;font-size:29px;color:#1a8ac9;transform:scaleX(0.758);">CLUBE</div><div class="abs" style="left:199px;top:16.5px;width:191px;height:49px;background:#000;border-radius:6px"></div><div class="abs" style="left:201px;top:19px;width:187px;height:44px;background:#fff;border-radius:4px"></div><div class="t" style="left:212.7px;top:35.0px;font-size:16px;color:#e6e6e6;transform:scaleX(0.845);">Buscar por: nome, rua, cle</div><div class="abs" style="left:1539px;top:9px;width:51px;height:38px;background:#fa2558;border-radius:5px"></div><div class="t" style="left:1551.0px;top:21.5px;font-size:16px;color:#ffd6e0;transform:scaleX(0.718);font-weight:bold;">SAIR</div><div class="abs" style="left:-20px;top:75px;width:207px;height:845px;background:#2c4a5b"></div><div class="abs" style="left:-20px;top:75px;width:207px;height:4px;background:#95a6ad"></div><div class="abs" style="left:187px;top:75px;width:4px;height:845px;background:#fbfbfb"></div><div class="abs" style="left:185px;top:860px;width:2px;height:60px;background:#0a1a40"></div><div class="sep" style="top:138.4px"></div><div class="t" style="left:40.2px;top:100.1px;font-size:21px;color:#dde2e5;transform:scaleX(0.769);">Home</div><div class="abs" style="left:10px;top:97.5px;line-height:0"><svg width="22" height="22" viewBox="0 0 22 22"><path d="M1.5 11.5 L11 3 L20.5 11.5" fill="none" stroke="#e9edef" stroke-width="2.6" stroke-linejoin="round"/><path d="M4.5 9.5 V20.5 H9 V15 H13 V20.5 H17.5 V9.5" fill="none" stroke="#e9edef" stroke-width="2.4"/><rect x="15" y="2.5" width="2.5" height="5" fill="#e9edef"/></svg></div><div class="sep" style="top:203.4px"></div><div class="t" style="left:40.2px;top:165.2px;font-size:21px;color:#dde2e5;transform:scaleX(0.774);">Cadastro</div><div class="abs" style="left:10px;top:160px;line-height:0"><svg width="22" height="26" viewBox="0 0 22 26"><rect x="1.5" y="1.5" width="19" height="16" rx="2" fill="none" stroke="#e9edef" stroke-width="3"/><rect x="3" y="7" width="16" height="4" fill="#e9edef" opacity="0.35"/><rect x="7" y="20" width="8" height="4" fill="#e9edef"/><rect x="9.5" y="17" width="3" height="4" fill="#e9edef"/></svg></div><svg class="abs" style="left:168px;top:173.4px" width="9" height="15" viewBox="0 0 9 15"><path d="M2 2 L7 7.5 L2 13" fill="none" stroke="#b8c6cc" stroke-width="2.4"/></svg><div class="sep" style="top:268.5px"></div><div class="t" style="left:40.3px;top:230.2px;font-size:21px;color:#dde2e5;transform:scaleX(0.722);">Processos</div><div class="abs" style="left:10px;top:225.5px;line-height:0"><svg width="22" height="26" viewBox="0 0 22 26"><path d="M1 1 H11 L14 4 V19 H1 Z" fill="#e9edef"/><path d="M8 9 H17 L21 13 V25 H8 Z" fill="#e9edef" stroke="#10222d" stroke-width="1.6"/><rect x="10.5" y="15" width="5" height="6" fill="#10222d"/></svg></div><svg class="abs" style="left:168px;top:238.5px" width="9" height="15" viewBox="0 0 9 15"><path d="M2 2 L7 7.5 L2 13" fill="none" stroke="#b8c6cc" stroke-width="2.4"/></svg><div class="sep" style="top:333.5px"></div><div class="t" style="left:40.2px;top:295.3px;font-size:21px;color:#dde2e5;transform:scaleX(0.776);">Financeiro</div><div class="abs" style="left:10px;top:294px;line-height:0"><svg width="22" height="20" viewBox="0 0 22 20"><rect x="1.5" y="1.5" width="19" height="16" fill="none" stroke="#e9edef" stroke-width="3"/><ellipse cx="11" cy="9.5" rx="4" ry="5" fill="#10222d" stroke="#e9edef" stroke-width="1.4"/></svg></div><svg class="abs" style="left:168px;top:303.5px" width="9" height="15" viewBox="0 0 9 15"><path d="M2 2 L7 7.5 L2 13" fill="none" stroke="#b8c6cc" stroke-width="2.4"/></svg><div class="sep" style="top:398.6px"></div><div class="t" style="left:40.2px;top:360.3px;font-size:21px;color:#dde2e5;transform:scaleX(0.763);">Relatórios</div><div class="abs" style="left:10px;top:354px;line-height:0"><svg width="22" height="28" viewBox="0 0 22 28"><rect x="3" y="1" width="17" height="26" rx="2.5" fill="#e9edef"/><rect x="6" y="4" width="11" height="11" fill="#5a6f7b"/><rect x="6" y="18" width="11" height="2.5" fill="#5a6f7b"/></svg></div><svg class="abs" style="left:168px;top:368.6px" width="9" height="15" viewBox="0 0 9 15"><path d="M2 2 L7 7.5 L2 13" fill="none" stroke="#b8c6cc" stroke-width="2.4"/></svg><div class="sep" style="top:463.6px"></div><div class="t" style="left:38.3px;top:425.4px;font-size:21px;color:#dde2e5;transform:scaleX(0.748);">Impressões</div><div class="abs" style="left:10px;top:420px;line-height:0"><svg width="22" height="27" viewBox="0 0 22 27"><rect x="5" y="1.5" width="12" height="9" rx="3" fill="none" stroke="#e9edef" stroke-width="2.6"/><rect x="1" y="10" width="20" height="11" rx="3.5" fill="#e9edef"/><rect x="4.5" y="17" width="13" height="9" fill="#e9edef" stroke="#2d4b5d" stroke-width="1.4"/></svg></div><svg class="abs" style="left:168px;top:433.6px" width="9" height="15" viewBox="0 0 9 15"><path d="M2 2 L7 7.5 L2 13" fill="none" stroke="#b8c6cc" stroke-width="2.4"/></svg><div class="sep" style="top:528.7px"></div><div class="t" style="left:38.2px;top:490.4px;font-size:21px;color:#dde2e5;transform:scaleX(0.773);">Consultar Armas</div><div class="abs" style="left:10px;top:489px;line-height:0"><svg width="22" height="24" viewBox="0 0 22 24"><circle cx="9" cy="9.5" r="6.5" fill="#10222d" stroke="#e9edef" stroke-width="3.4"/><path d="M13.5 15 L18.5 21.5" stroke="#e9edef" stroke-width="3.8" stroke-linecap="round"/></svg></div><div class="sep" style="top:593.8px"></div><div class="t" style="left:38.2px;top:555.5px;font-size:21px;color:#dde2e5;transform:scaleX(0.757);">Editor de Texto</div><div class="abs" style="left:10px;top:551px;line-height:0"><svg width="22" height="26" viewBox="0 0 22 26"><path d="M2.5 1.5 H13 L19.5 8 V24.5 H2.5 Z" fill="none" stroke="#e9edef" stroke-width="2.6"/><path d="M12 2 V9 H19" fill="none" stroke="#e9edef" stroke-width="2.2"/><path d="M7 12 V21 M11.5 13 V21" stroke="#e9edef" stroke-width="2.4"/></svg></div><div class="sep" style="top:658.8px"></div><div class="t" style="left:39.2px;top:620.5px;font-size:21px;color:#dde2e5;transform:scaleX(0.767);">GRU</div><div class="abs" style="left:10px;top:617px;line-height:0"><svg width="24" height="22" viewBox="0 0 24 22"><rect x="0" y="1" width="23" height="20" fill="#e9edef"/><path d="M5 1 V21 M10.5 1 V21 M14 1 V21 M18 1 V21" stroke="#7e929c" stroke-width="1.3"/></svg></div><div class="sep" style="top:723.8px"></div><div class="t" style="left:40.3px;top:685.6px;font-size:21px;color:#dde2e5;transform:scaleX(0.718);">Envios</div><div class="abs" style="left:10px;top:681px;line-height:0"><svg width="22" height="26" viewBox="0 0 22 26"><path d="M21 1 L1 15 L8 17 L10 25 L13 19 L19 22 Z" fill="#e9edef"/><path d="M21 1 L8 17 L10 25" fill="none" stroke="#1f4a8a" stroke-width="2"/></svg></div><svg class="abs" style="left:168px;top:693.8px" width="9" height="15" viewBox="0 0 9 15"><path d="M2 2 L7 7.5 L2 13" fill="none" stroke="#b8c6cc" stroke-width="2.4"/></svg><div class="sep" style="top:788.9px"></div><div class="t" style="left:38.2px;top:750.6px;font-size:21px;color:#dde2e5;transform:scaleX(0.760);">Campeonatos</div><div class="abs" style="left:10px;top:745px;line-height:0"><svg width="22" height="26" viewBox="0 0 22 26"><path d="M3.5 1.5 H18.5 V8 C18.5 14 14 17 11 17 C8 17 3.5 14 3.5 8 Z" fill="#e9edef"/><path d="M4 4 H1 V7 C1 11 3 12 5 12 M18 4 H21 V7 C21 11 19 12 17 12" fill="none" stroke="#e9edef" stroke-width="2"/><rect x="9" y="16" width="4" height="5" fill="#e9edef"/><rect x="5" y="21" width="12" height="4" rx="1" fill="#e9edef"/></svg></div><div class="sep" style="top:853.9px"></div><div class="t" style="left:38.3px;top:815.7px;font-size:21px;color:#dde2e5;transform:scaleX(0.746);">Configurações</div><div class="abs" style="left:10px;top:810px;line-height:0"><svg width="22" height="26" viewBox="0 0 22 26"><circle cx="11" cy="13" r="7.5" fill="#e9edef"/><path d="M11 2 V24 M0.5 13 H21.5 M3.5 5.5 L18.5 20.5 M18.5 5.5 L3.5 20.5" stroke="#e9edef" stroke-width="4"/><circle cx="11" cy="13" r="3.3" fill="#1d5a8a"/></svg></div><div class="abs" style="left:204px;top:109px;width:32px;height:31px;background:linear-gradient(#cbced1 0 7px,transparent 7px 10.5px,#cbced1 10.5px 18.5px,transparent 18.5px 23px,#cbced1 23px 31px)"></div><div class="abs" style="left:214px;top:122px;width:19px;height:3px;background:#e2e4e6"></div><div class="t" style="left:245.9px;top:116.0px;font-size:29px;color:#cdcdcd;transform:scaleX(0.810);">DECLARAÇÕES</div><div class="abs" style="left:204px;top:182px;width:1384px;height:44px;background:#fff;box-shadow:0 1px 2px rgba(0,0,0,0.07)"></div><svg class="abs" style="left:220px;top:197px" width="15" height="16" viewBox="0 0 15 16"><path d="M0.5 8 L7.5 1.5 L14.5 8" fill="none" stroke="#3a3a3a" stroke-width="2.2"/><path d="M2.5 7 V15 H6 V10.5 H9 V15 H12.5 V7 L7.5 3 Z" fill="#3a3a3a"/></svg><div class="t" style="left:239.8px;top:196.8px;font-size:18px;color:#5a8cec;transform:scaleX(0.796);">Home</div><div class="t" style="left:286.5px;top:197.3px;font-size:18px;color:#d6d6d6;transform:scaleX(1.400);">/</div><div class="abs" style="left:301px;top:198px;width:14px;height:14px;background:linear-gradient(#7d7d7d 0 3px,#d8d8d8 3px 6px,#b0b0b0 6px 7px,#d8d8d8 7px 10px,#b8b8b8 10px);border:1px solid #888;border-radius:1px"></div><div class="t" style="left:320.0px;top:196.8px;font-size:18px;color:#5a8cec;transform:scaleX(0.804);">Ativos</div><div class="t" style="left:371.2px;top:196.8px;font-size:18px;color:#5a8cec;transform:scaleX(0.803);">Inativos</div><div class="t" style="left:433.7px;top:196.8px;font-size:18px;color:#5a8cec;transform:scaleX(0.719);">Todos</div><div class="t" style="left:479.5px;top:196.8px;font-size:18px;color:#5a8cec;transform:scaleX(0.788);">Convidados</div><div class="t" style="left:566.4px;top:196.8px;font-size:18px;color:#5a8cec;transform:scaleX(0.797);">Visitantes</div><div class="abs" style="left:363.65px;top:197.5px;width:1.5px;height:18px;background:#dfcdb2"></div><div class="abs" style="left:426.25px;top:197.5px;width:1.5px;height:18px;background:#dfcdb2"></div><div class="abs" style="left:472.75px;top:197.5px;width:1.5px;height:18px;background:#dfcdb2"></div><div class="abs" style="left:559.65px;top:197.5px;width:1.5px;height:18px;background:#dfcdb2"></div><div class="abs" style="left:204px;top:250px;width:1384px;height:628px;background:#fff;box-shadow:0 1px 2px rgba(0,0,0,0.06)"></div><div class="abs" style="left:204px;top:250px;width:1384px;height:42px;background:#f5f5f5;border-bottom:1px solid #e6e6e6"></div><div class="t" style="left:221.0px;top:262.1px;font-size:18px;color:#86928c;transform:scaleX(0.790);">Tabela de Atiradores</div><svg class="abs" style="left:215.5px;top:307px" width="10" height="18" viewBox="0 0 10 18"><circle cx="5" cy="3.2" r="3" fill="#1f7a5c"/><path d="M1 18 V10 C1 7.5 3 7 5 7 C7 7 9 7.5 9 10 V18 Z" fill="#1f7a5c"/></svg><div class="t" style="left:229.8px;top:308.8px;font-size:18px;color:#5a7269;transform:scaleX(0.840);">Foto</div><div class="t" style="left:290.1px;top:308.8px;font-size:18px;color:#5a7269;transform:scaleX(0.868);">Matricula</div><svg class="abs" style="left:390.5px;top:307px" width="10" height="18" viewBox="0 0 10 18"><circle cx="5" cy="3.2" r="3" fill="#1f7a5c"/><path d="M1 18 V10 C1 7.5 3 7 5 7 C7 7 9 7.5 9 10 V18 Z" fill="#1f7a5c"/></svg><div class="t" style="left:406.2px;top:308.8px;font-size:18px;color:#5a7269;transform:scaleX(0.824);">Nome completo</div><svg class="abs" style="left:671.5px;top:307px" width="15" height="18" viewBox="0 0 15 18"><circle cx="5" cy="5.5" r="3.8" fill="none" stroke="#3f7f6a" stroke-width="2.4"/><path d="M7.5 8.5 L12.5 16.5" stroke="#2f7460" stroke-width="2.6"/><path d="M10 12.5 L8 14" stroke="#3f7f6a" stroke-width="1.8"/></svg><div class="t" style="left:689.0px;top:308.8px;font-size:18px;color:#5a7269;transform:scaleX(0.817);">Ação</div><div class="row" style="top:341.5px"></div><div class="ph" style="top:352.8px;line-height:0"><svg width="32" height="38" viewBox="0 0 32 38"><rect width="32" height="38" fill="#fff"/><ellipse cx="16" cy="13" rx="6.5" ry="9" fill="#e6c4a0"/><path d="M9.5 11 C9 4 12 1.5 16 1.5 C20 1.5 23 4 22.5 11 C21 7 19 6 16 6 C13 6 11 7 9.5 11 Z" fill="#7a6a66"/><circle cx="12" cy="6" r="2" fill="#4a1020"/><path d="M1 38 V28 C2 24 6 22 11 21 L16 30 L21 21 C26 22 30 24 31 28 V38 Z" fill="#0c0c0c"/><path d="M12 22 L16 38 L20 22 Z" fill="#e8eef0"/></svg></div><div class="t" style="left:291.0px;top:357.4px;font-size:17px;color:#8a8a8a;transform:scaleX(0.919);">0001</div><div class="t" style="left:389.0px;top:357.4px;font-size:17px;color:#8a8a8a;transform:scaleX(0.837);">Sergio Antonio da Silva Rodrigues</div><div class="b" style="left:672px;top:353.0px;width:62px"><svg width="12" height="19" viewBox="0 0 12 19" style="position:absolute;left:9.5px;top:9.5px"><path d="M1.2 1.2 H7.5 L10.8 4.5 V17.8 H1.2 Z" fill="none" stroke="#d6f0fb" stroke-width="2.2"/><path d="M3.5 8 H8.5 M3.5 11 H8.5 M3.5 14 H8.5" stroke="#c8ebf8" stroke-width="1.3"/></svg></div><div class="b" style="left:738px;top:353.0px;width:69px"><svg width="12" height="19" viewBox="0 0 12 19" style="position:absolute;left:9.5px;top:9.5px"><path d="M1.2 1.2 H7.5 L10.8 4.5 V17.8 H1.2 Z" fill="none" stroke="#d6f0fb" stroke-width="2.2"/><path d="M3.5 8 H8.5 M3.5 11 H8.5 M3.5 14 H8.5" stroke="#c8ebf8" stroke-width="1.3"/></svg></div><div class="b" style="left:811px;top:353.0px;width:60px"><svg width="12" height="19" viewBox="0 0 12 19" style="position:absolute;left:9.5px;top:9.5px"><path d="M1.2 1.2 H7.5 L10.8 4.5 V17.8 H1.2 Z" fill="none" stroke="#d6f0fb" stroke-width="2.2"/><path d="M3.5 8 H8.5 M3.5 11 H8.5 M3.5 14 H8.5" stroke="#c8ebf8" stroke-width="1.3"/></svg></div><div class="b" style="left:876px;top:353.0px;width:55px"><svg width="12" height="19" viewBox="0 0 12 19" style="position:absolute;left:9.5px;top:9.5px"><path d="M1.2 1.2 H7.5 L10.8 4.5 V17.8 H1.2 Z" fill="none" stroke="#d6f0fb" stroke-width="2.2"/><path d="M3.5 8 H8.5 M3.5 11 H8.5 M3.5 14 H8.5" stroke="#c8ebf8" stroke-width="1.3"/></svg></div><div class="b" style="left:936px;top:353.0px;width:58px"><svg width="12" height="19" viewBox="0 0 12 19" style="position:absolute;left:9.5px;top:9.5px"><path d="M1.2 1.2 H7.5 L10.8 4.5 V17.8 H1.2 Z" fill="none" stroke="#d6f0fb" stroke-width="2.2"/><path d="M3.5 8 H8.5 M3.5 11 H8.5 M3.5 14 H8.5" stroke="#c8ebf8" stroke-width="1.3"/></svg></div><div class="b" style="left:998px;top:353.0px;width:80px"><svg width="12" height="19" viewBox="0 0 12 19" style="position:absolute;left:9.5px;top:9.5px"><path d="M1.2 1.2 H7.5 L10.8 4.5 V17.8 H1.2 Z" fill="none" stroke="#d6f0fb" stroke-width="2.2"/><path d="M3.5 8 H8.5 M3.5 11 H8.5 M3.5 14 H8.5" stroke="#c8ebf8" stroke-width="1.3"/></svg></div><div class="b" style="left:1083px;top:353.0px;width:80px"><svg width="12" height="19" viewBox="0 0 12 19" style="position:absolute;left:9.5px;top:9.5px"><path d="M1.2 1.2 H7.5 L10.8 4.5 V17.8 H1.2 Z" fill="none" stroke="#d6f0fb" stroke-width="2.2"/><path d="M3.5 8 H8.5 M3.5 11 H8.5 M3.5 14 H8.5" stroke="#c8ebf8" stroke-width="1.3"/></svg></div><div class="b" style="left:1167px;top:353.0px;width:60px"><svg width="12" height="19" viewBox="0 0 12 19" style="position:absolute;left:9.5px;top:9.5px"><path d="M1.2 1.2 H7.5 L10.8 4.5 V17.8 H1.2 Z" fill="none" stroke="#d6f0fb" stroke-width="2.2"/><path d="M3.5 8 H8.5 M3.5 11 H8.5 M3.5 14 H8.5" stroke="#c8ebf8" stroke-width="1.3"/></svg></div><div class="b" style="left:1232px;top:353.0px;width:61px"><svg width="12" height="19" viewBox="0 0 12 19" style="position:absolute;left:9.5px;top:9.5px"><path d="M1.2 1.2 H7.5 L10.8 4.5 V17.8 H1.2 Z" fill="none" stroke="#d6f0fb" stroke-width="2.2"/><path d="M3.5 8 H8.5 M3.5 11 H8.5 M3.5 14 H8.5" stroke="#c8ebf8" stroke-width="1.3"/></svg></div><div class="b" style="left:1298px;top:353.0px;width:52px"><svg width="12" height="19" viewBox="0 0 12 19" style="position:absolute;left:9.5px;top:9.5px"><path d="M1.2 1.2 H7.5 L10.8 4.5 V17.8 H1.2 Z" fill="none" stroke="#d6f0fb" stroke-width="2.2"/><path d="M3.5 8 H8.5 M3.5 11 H8.5 M3.5 14 H8.5" stroke="#c8ebf8" stroke-width="1.3"/></svg></div><div class="b" style="left:1355px;top:353.0px;width:57px"><svg width="12" height="19" viewBox="0 0 12 19" style="position:absolute;left:9.5px;top:9.5px"><path d="M1.2 1.2 H7.5 L10.8 4.5 V17.8 H1.2 Z" fill="none" stroke="#d6f0fb" stroke-width="2.2"/><path d="M3.5 8 H8.5 M3.5 11 H8.5 M3.5 14 H8.5" stroke="#c8ebf8" stroke-width="1.3"/></svg></div><div class="t" style="left:697.0px;top:367.0px;font-size:13px;color:#e8f7fd;transform:scaleX(0.914);font-weight:bold;">DGA</div><div class="t" style="left:763.0px;top:367.0px;font-size:13px;color:#e8f7fd;transform:scaleX(0.931);font-weight:bold;">DGA2</div><div class="t" style="left:836.0px;top:367.0px;font-size:13px;color:#e8f7fd;transform:scaleX(0.907);font-weight:bold;">DSA</div><div class="t" style="left:901.0px;top:367.0px;font-size:13px;color:#e8f7fd;transform:scaleX(0.886);font-weight:bold;">DIC</div><div class="t" style="left:961.0px;top:367.0px;font-size:13px;color:#e8f7fd;transform:scaleX(0.900);font-weight:bold;">TLÇ</div><div class="t" style="left:1023.0px;top:367.0px;font-size:13px;color:#e8f7fd;transform:scaleX(0.890);font-weight:bold;">DSTLÇ1</div><div class="t" style="left:1108.0px;top:367.0px;font-size:13px;color:#e8f7fd;transform:scaleX(0.890);font-weight:bold;">DSTLÇ2</div><div class="t" style="left:1192.0px;top:367.0px;font-size:13px;color:#e8f7fd;transform:scaleX(0.907);font-weight:bold;">RSD</div><div class="t" style="left:1257.0px;top:367.0px;font-size:13px;color:#e8f7fd;transform:scaleX(0.879);font-weight:bold;">DMP</div><div class="t" style="left:1323.0px;top:367.0px;font-size:13px;color:#e8f7fd;transform:scaleX(0.786);font-weight:bold;">DEI</div><div class="t" style="left:1380.0px;top:367.0px;font-size:13px;color:#e8f7fd;transform:scaleX(0.768);font-weight:bold;">DRE</div><div class="row" style="top:401.2px"></div><div class="ph" style="top:412.5px;line-height:0"><svg width="32" height="38" viewBox="0 0 32 38"><rect width="32" height="38" fill="#dfe0e3"/><ellipse cx="15" cy="17" rx="9.5" ry="12.5" fill="#b47c62"/><path d="M5 15 C4 5 9 1 15 1 C21 1 25 5 25 13 C23 8 19 7 15 7 C11 7 8 9 5 15 Z" fill="#161210"/><ellipse cx="12" cy="17" rx="2" ry="1.2" fill="#3a2418"/><ellipse cx="18" cy="17" rx="2" ry="1.2" fill="#3a2418"/><path d="M0 38 V33 C3 30 7 29 10 29 C12 31 18 31 20 29 C24 29 29 30 32 33 V38 Z" fill="#141414"/></svg></div><div class="t" style="left:291.0px;top:417.1px;font-size:17px;color:#8a8a8a;transform:scaleX(0.919);">0003</div><div class="t" style="left:389.0px;top:417.1px;font-size:17px;color:#8a8a8a;transform:scaleX(0.837);">Antonio Carlos Rezende</div><div class="b" style="left:672px;top:412.7px;width:62px"><svg width="12" height="19" viewBox="0 0 12 19" style="position:absolute;left:9.5px;top:9.5px"><path d="M1.2 1.2 H7.5 L10.8 4.5 V17.8 H1.2 Z" fill="none" stroke="#d6f0fb" stroke-width="2.2"/><path d="M3.5 8 H8.5 M3.5 11 H8.5 M3.5 14 H8.5" stroke="#c8ebf8" stroke-width="1.3"/></svg></div><div class="b" style="left:738px;top:412.7px;width:69px"><svg width="12" height="19" viewBox="0 0 12 19" style="position:absolute;left:9.5px;top:9.5px"><path d="M1.2 1.2 H7.5 L10.8 4.5 V17.8 H1.2 Z" fill="none" stroke="#d6f0fb" stroke-width="2.2"/><path d="M3.5 8 H8.5 M3.5 11 H8.5 M3.5 14 H8.5" stroke="#c8ebf8" stroke-width="1.3"/></svg></div><div class="b" style="left:811px;top:412.7px;width:60px"><svg width="12" height="19" viewBox="0 0 12 19" style="position:absolute;left:9.5px;top:9.5px"><path d="M1.2 1.2 H7.5 L10.8 4.5 V17.8 H1.2 Z" fill="none" stroke="#d6f0fb" stroke-width="2.2"/><path d="M3.5 8 H8.5 M3.5 11 H8.5 M3.5 14 H8.5" stroke="#c8ebf8" stroke-width="1.3"/></svg></div><div class="b" style="left:876px;top:412.7px;width:55px"><svg width="12" height="19" viewBox="0 0 12 19" style="position:absolute;left:9.5px;top:9.5px"><path d="M1.2 1.2 H7.5 L10.8 4.5 V17.8 H1.2 Z" fill="none" stroke="#d6f0fb" stroke-width="2.2"/><path d="M3.5 8 H8.5 M3.5 11 H8.5 M3.5 14 H8.5" stroke="#c8ebf8" stroke-width="1.3"/></svg></div><div class="b" style="left:936px;top:412.7px;width:58px"><svg width="12" height="19" viewBox="0 0 12 19" style="position:absolute;left:9.5px;top:9.5px"><path d="M1.2 1.2 H7.5 L10.8 4.5 V17.8 H1.2 Z" fill="none" stroke="#d6f0fb" stroke-width="2.2"/><path d="M3.5 8 H8.5 M3.5 11 H8.5 M3.5 14 H8.5" stroke="#c8ebf8" stroke-width="1.3"/></svg></div><div class="b" style="left:998px;top:412.7px;width:80px"><svg width="12" height="19" viewBox="0 0 12 19" style="position:absolute;left:9.5px;top:9.5px"><path d="M1.2 1.2 H7.5 L10.8 4.5 V17.8 H1.2 Z" fill="none" stroke="#d6f0fb" stroke-width="2.2"/><path d="M3.5 8 H8.5 M3.5 11 H8.5 M3.5 14 H8.5" stroke="#c8ebf8" stroke-width="1.3"/></svg></div><div class="b" style="left:1083px;top:412.7px;width:80px"><svg width="12" height="19" viewBox="0 0 12 19" style="position:absolute;left:9.5px;top:9.5px"><path d="M1.2 1.2 H7.5 L10.8 4.5 V17.8 H1.2 Z" fill="none" stroke="#d6f0fb" stroke-width="2.2"/><path d="M3.5 8 H8.5 M3.5 11 H8.5 M3.5 14 H8.5" stroke="#c8ebf8" stroke-width="1.3"/></svg></div><div class="b" style="left:1167px;top:412.7px;width:60px"><svg width="12" height="19" viewBox="0 0 12 19" style="position:absolute;left:9.5px;top:9.5px"><path d="M1.2 1.2 H7.5 L10.8 4.5 V17.8 H1.2 Z" fill="none" stroke="#d6f0fb" stroke-width="2.2"/><path d="M3.5 8 H8.5 M3.5 11 H8.5 M3.5 14 H8.5" stroke="#c8ebf8" stroke-width="1.3"/></svg></div><div class="b" style="left:1232px;top:412.7px;width:61px"><svg width="12" height="19" viewBox="0 0 12 19" style="position:absolute;left:9.5px;top:9.5px"><path d="M1.2 1.2 H7.5 L10.8 4.5 V17.8 H1.2 Z" fill="none" stroke="#d6f0fb" stroke-width="2.2"/><path d="M3.5 8 H8.5 M3.5 11 H8.5 M3.5 14 H8.5" stroke="#c8ebf8" stroke-width="1.3"/></svg></div><div class="b" style="left:1298px;top:412.7px;width:52px"><svg width="12" height="19" viewBox="0 0 12 19" style="position:absolute;left:9.5px;top:9.5px"><path d="M1.2 1.2 H7.5 L10.8 4.5 V17.8 H1.2 Z" fill="none" stroke="#d6f0fb" stroke-width="2.2"/><path d="M3.5 8 H8.5 M3.5 11 H8.5 M3.5 14 H8.5" stroke="#c8ebf8" stroke-width="1.3"/></svg></div><div class="b" style="left:1355px;top:412.7px;width:57px"><svg width="12" height="19" viewBox="0 0 12 19" style="position:absolute;left:9.5px;top:9.5px"><path d="M1.2 1.2 H7.5 L10.8 4.5 V17.8 H1.2 Z" fill="none" stroke="#d6f0fb" stroke-width="2.2"/><path d="M3.5 8 H8.5 M3.5 11 H8.5 M3.5 14 H8.5" stroke="#c8ebf8" stroke-width="1.3"/></svg></div><div class="t" style="left:697.0px;top:426.7px;font-size:13px;color:#e8f7fd;transform:scaleX(0.914);font-weight:bold;">DGA</div><div class="t" style="left:763.0px;top:426.7px;font-size:13px;color:#e8f7fd;transform:scaleX(0.931);font-weight:bold;">DGA2</div><div class="t" style="left:836.0px;top:426.7px;font-size:13px;color:#e8f7fd;transform:scaleX(0.907);font-weight:bold;">DSA</div><div class="t" style="left:901.0px;top:426.7px;font-size:13px;color:#e8f7fd;transform:scaleX(0.886);font-weight:bold;">DIC</div><div class="t" style="left:961.0px;top:426.7px;font-size:13px;color:#e8f7fd;transform:scaleX(0.900);font-weight:bold;">TLÇ</div><div class="t" style="left:1023.0px;top:426.7px;font-size:13px;color:#e8f7fd;transform:scaleX(0.890);font-weight:bold;">DSTLÇ1</div><div class="t" style="left:1108.0px;top:426.7px;font-size:13px;color:#e8f7fd;transform:scaleX(0.890);font-weight:bold;">DSTLÇ2</div><div class="t" style="left:1192.0px;top:426.7px;font-size:13px;color:#e8f7fd;transform:scaleX(0.907);font-weight:bold;">RSD</div><div class="t" style="left:1257.0px;top:426.7px;font-size:13px;color:#e8f7fd;transform:scaleX(0.879);font-weight:bold;">DMP</div><div class="t" style="left:1323.0px;top:426.7px;font-size:13px;color:#e8f7fd;transform:scaleX(0.786);font-weight:bold;">DEI</div><div class="t" style="left:1380.0px;top:426.7px;font-size:13px;color:#e8f7fd;transform:scaleX(0.768);font-weight:bold;">DRE</div><div class="row" style="top:460.9px"></div><div class="ph" style="top:472.2px;line-height:0"><svg width="32" height="38" viewBox="0 0 32 38"><rect width="32" height="38" fill="#fff"/><path d="M6 34 C6 30 9 28 12 28 H20 C23 28 26 30 27 34 Z" fill="#e0a888"/><rect x="12" y="22" width="8" height="9" fill="#e2ac90"/><ellipse cx="16" cy="16" rx="8" ry="11" fill="#e8b8a0"/><path d="M6 20 C4 8 9 3 16 3 C23 3 27 8 25 18 C24 11 20 8 15 8 C10 8 8 12 6 20 Z" fill="#3a1810"/><path d="M0 38 V35 C6 33 10 33 16 33 C22 33 27 33 32 35 V38 Z" fill="#e4a070"/></svg></div><div class="t" style="left:291.0px;top:476.8px;font-size:17px;color:#8a8a8a;transform:scaleX(0.919);">0004</div><div class="t" style="left:388.2px;top:476.8px;font-size:17px;color:#8a8a8a;transform:scaleX(0.813);">Paula Bianca Freitas Silva</div><div class="b" style="left:672px;top:472.4px;width:62px"><svg width="12" height="19" viewBox="0 0 12 19" style="position:absolute;left:9.5px;top:9.5px"><path d="M1.2 1.2 H7.5 L10.8 4.5 V17.8 H1.2 Z" fill="none" stroke="#d6f0fb" stroke-width="2.2"/><path d="M3.5 8 H8.5 M3.5 11 H8.5 M3.5 14 H8.5" stroke="#c8ebf8" stroke-width="1.3"/></svg></div><div class="b" style="left:738px;top:472.4px;width:69px"><svg width="12" height="19" viewBox="0 0 12 19" style="position:absolute;left:9.5px;top:9.5px"><path d="M1.2 1.2 H7.5 L10.8 4.5 V17.8 H1.2 Z" fill="none" stroke="#d6f0fb" stroke-width="2.2"/><path d="M3.5 8 H8.5 M3.5 11 H8.5 M3.5 14 H8.5" stroke="#c8ebf8" stroke-width="1.3"/></svg></div><div class="b" style="left:811px;top:472.4px;width:60px"><svg width="12" height="19" viewBox="0 0 12 19" style="position:absolute;left:9.5px;top:9.5px"><path d="M1.2 1.2 H7.5 L10.8 4.5 V17.8 H1.2 Z" fill="none" stroke="#d6f0fb" stroke-width="2.2"/><path d="M3.5 8 H8.5 M3.5 11 H8.5 M3.5 14 H8.5" stroke="#c8ebf8" stroke-width="1.3"/></svg></div><div class="b" style="left:876px;top:472.4px;width:55px"><svg width="12" height="19" viewBox="0 0 12 19" style="position:absolute;left:9.5px;top:9.5px"><path d="M1.2 1.2 H7.5 L10.8 4.5 V17.8 H1.2 Z" fill="none" stroke="#d6f0fb" stroke-width="2.2"/><path d="M3.5 8 H8.5 M3.5 11 H8.5 M3.5 14 H8.5" stroke="#c8ebf8" stroke-width="1.3"/></svg></div><div class="b" style="left:936px;top:472.4px;width:58px"><svg width="12" height="19" viewBox="0 0 12 19" style="position:absolute;left:9.5px;top:9.5px"><path d="M1.2 1.2 H7.5 L10.8 4.5 V17.8 H1.2 Z" fill="none" stroke="#d6f0fb" stroke-width="2.2"/><path d="M3.5 8 H8.5 M3.5 11 H8.5 M3.5 14 H8.5" stroke="#c8ebf8" stroke-width="1.3"/></svg></div><div class="b" style="left:998px;top:472.4px;width:80px"><svg width="12" height="19" viewBox="0 0 12 19" style="position:absolute;left:9.5px;top:9.5px"><path d="M1.2 1.2 H7.5 L10.8 4.5 V17.8 H1.2 Z" fill="none" stroke="#d6f0fb" stroke-width="2.2"/><path d="M3.5 8 H8.5 M3.5 11 H8.5 M3.5 14 H8.5" stroke="#c8ebf8" stroke-width="1.3"/></svg></div><div class="b" style="left:1083px;top:472.4px;width:80px"><svg width="12" height="19" viewBox="0 0 12 19" style="position:absolute;left:9.5px;top:9.5px"><path d="M1.2 1.2 H7.5 L10.8 4.5 V17.8 H1.2 Z" fill="none" stroke="#d6f0fb" stroke-width="2.2"/><path d="M3.5 8 H8.5 M3.5 11 H8.5 M3.5 14 H8.5" stroke="#c8ebf8" stroke-width="1.3"/></svg></div><div class="b" style="left:1167px;top:472.4px;width:60px"><svg width="12" height="19" viewBox="0 0 12 19" style="position:absolute;left:9.5px;top:9.5px"><path d="M1.2 1.2 H7.5 L10.8 4.5 V17.8 H1.2 Z" fill="none" stroke="#d6f0fb" stroke-width="2.2"/><path d="M3.5 8 H8.5 M3.5 11 H8.5 M3.5 14 H8.5" stroke="#c8ebf8" stroke-width="1.3"/></svg></div><div class="b" style="left:1232px;top:472.4px;width:61px"><svg width="12" height="19" viewBox="0 0 12 19" style="position:absolute;left:9.5px;top:9.5px"><path d="M1.2 1.2 H7.5 L10.8 4.5 V17.8 H1.2 Z" fill="none" stroke="#d6f0fb" stroke-width="2.2"/><path d="M3.5 8 H8.5 M3.5 11 H8.5 M3.5 14 H8.5" stroke="#c8ebf8" stroke-width="1.3"/></svg></div><div class="b" style="left:1298px;top:472.4px;width:52px"><svg width="12" height="19" viewBox="0 0 12 19" style="position:absolute;left:9.5px;top:9.5px"><path d="M1.2 1.2 H7.5 L10.8 4.5 V17.8 H1.2 Z" fill="none" stroke="#d6f0fb" stroke-width="2.2"/><path d="M3.5 8 H8.5 M3.5 11 H8.5 M3.5 14 H8.5" stroke="#c8ebf8" stroke-width="1.3"/></svg></div><div class="b" style="left:1355px;top:472.4px;width:57px"><svg width="12" height="19" viewBox="0 0 12 19" style="position:absolute;left:9.5px;top:9.5px"><path d="M1.2 1.2 H7.5 L10.8 4.5 V17.8 H1.2 Z" fill="none" stroke="#d6f0fb" stroke-width="2.2"/><path d="M3.5 8 H8.5 M3.5 11 H8.5 M3.5 14 H8.5" stroke="#c8ebf8" stroke-width="1.3"/></svg></div><div class="t" style="left:697.0px;top:486.4px;font-size:13px;color:#e8f7fd;transform:scaleX(0.914);font-weight:bold;">DGA</div><div class="t" style="left:763.0px;top:486.4px;font-size:13px;color:#e8f7fd;transform:scaleX(0.931);font-weight:bold;">DGA2</div><div class="t" style="left:836.0px;top:486.4px;font-size:13px;color:#e8f7fd;transform:scaleX(0.907);font-weight:bold;">DSA</div><div class="t" style="left:901.0px;top:486.4px;font-size:13px;color:#e8f7fd;transform:scaleX(0.886);font-weight:bold;">DIC</div><div class="t" style="left:961.0px;top:486.4px;font-size:13px;color:#e8f7fd;transform:scaleX(0.900);font-weight:bold;">TLÇ</div><div class="t" style="left:1023.0px;top:486.4px;font-size:13px;color:#e8f7fd;transform:scaleX(0.890);font-weight:bold;">DSTLÇ1</div><div class="t" style="left:1108.0px;top:486.4px;font-size:13px;color:#e8f7fd;transform:scaleX(0.890);font-weight:bold;">DSTLÇ2</div><div class="t" style="left:1192.0px;top:486.4px;font-size:13px;color:#e8f7fd;transform:scaleX(0.907);font-weight:bold;">RSD</div><div class="t" style="left:1257.0px;top:486.4px;font-size:13px;color:#e8f7fd;transform:scaleX(0.879);font-weight:bold;">DMP</div><div class="t" style="left:1323.0px;top:486.4px;font-size:13px;color:#e8f7fd;transform:scaleX(0.786);font-weight:bold;">DEI</div><div class="t" style="left:1380.0px;top:486.4px;font-size:13px;color:#e8f7fd;transform:scaleX(0.768);font-weight:bold;">DRE</div><div class="row" style="top:520.6px"></div><div class="ph" style="top:531.9px;line-height:0"><svg width="32" height="38" viewBox="0 0 32 38"><rect width="32" height="38" fill="#dadcde"/><ellipse cx="15" cy="17" rx="8" ry="11.5" fill="#86583e"/><path d="M6 14 C5 5 10 2 15 2 C21 2 25 5 24 13 C22 8 19 7 15 7 C11 7 8 9 6 14 Z" fill="#121010"/><path d="M0 38 V31 C4 29 9 28 11 28 C13 30 17 30 19 28 C22 28 28 29 32 31 V38 Z" fill="#f0d020"/></svg></div><div class="t" style="left:291.0px;top:536.5px;font-size:17px;color:#8a8a8a;transform:scaleX(0.919);">0005</div><div class="t" style="left:389.0px;top:536.5px;font-size:17px;color:#8a8a8a;transform:scaleX(0.866);">Ademilton Dresch</div><div class="b" style="left:672px;top:532.1px;width:62px"><svg width="12" height="19" viewBox="0 0 12 19" style="position:absolute;left:9.5px;top:9.5px"><path d="M1.2 1.2 H7.5 L10.8 4.5 V17.8 H1.2 Z" fill="none" stroke="#d6f0fb" stroke-width="2.2"/><path d="M3.5 8 H8.5 M3.5 11 H8.5 M3.5 14 H8.5" stroke="#c8ebf8" stroke-width="1.3"/></svg></div><div class="b" style="left:738px;top:532.1px;width:69px"><svg width="12" height="19" viewBox="0 0 12 19" style="position:absolute;left:9.5px;top:9.5px"><path d="M1.2 1.2 H7.5 L10.8 4.5 V17.8 H1.2 Z" fill="none" stroke="#d6f0fb" stroke-width="2.2"/><path d="M3.5 8 H8.5 M3.5 11 H8.5 M3.5 14 H8.5" stroke="#c8ebf8" stroke-width="1.3"/></svg></div><div class="b" style="left:811px;top:532.1px;width:60px"><svg width="12" height="19" viewBox="0 0 12 19" style="position:absolute;left:9.5px;top:9.5px"><path d="M1.2 1.2 H7.5 L10.8 4.5 V17.8 H1.2 Z" fill="none" stroke="#d6f0fb" stroke-width="2.2"/><path d="M3.5 8 H8.5 M3.5 11 H8.5 M3.5 14 H8.5" stroke="#c8ebf8" stroke-width="1.3"/></svg></div><div class="b" style="left:876px;top:532.1px;width:55px"><svg width="12" height="19" viewBox="0 0 12 19" style="position:absolute;left:9.5px;top:9.5px"><path d="M1.2 1.2 H7.5 L10.8 4.5 V17.8 H1.2 Z" fill="none" stroke="#d6f0fb" stroke-width="2.2"/><path d="M3.5 8 H8.5 M3.5 11 H8.5 M3.5 14 H8.5" stroke="#c8ebf8" stroke-width="1.3"/></svg></div><div class="b" style="left:936px;top:532.1px;width:58px"><svg width="12" height="19" viewBox="0 0 12 19" style="position:absolute;left:9.5px;top:9.5px"><path d="M1.2 1.2 H7.5 L10.8 4.5 V17.8 H1.2 Z" fill="none" stroke="#d6f0fb" stroke-width="2.2"/><path d="M3.5 8 H8.5 M3.5 11 H8.5 M3.5 14 H8.5" stroke="#c8ebf8" stroke-width="1.3"/></svg></div><div class="b" style="left:998px;top:532.1px;width:80px"><svg width="12" height="19" viewBox="0 0 12 19" style="position:absolute;left:9.5px;top:9.5px"><path d="M1.2 1.2 H7.5 L10.8 4.5 V17.8 H1.2 Z" fill="none" stroke="#d6f0fb" stroke-width="2.2"/><path d="M3.5 8 H8.5 M3.5 11 H8.5 M3.5 14 H8.5" stroke="#c8ebf8" stroke-width="1.3"/></svg></div><div class="b" style="left:1083px;top:532.1px;width:80px"><svg width="12" height="19" viewBox="0 0 12 19" style="position:absolute;left:9.5px;top:9.5px"><path d="M1.2 1.2 H7.5 L10.8 4.5 V17.8 H1.2 Z" fill="none" stroke="#d6f0fb" stroke-width="2.2"/><path d="M3.5 8 H8.5 M3.5 11 H8.5 M3.5 14 H8.5" stroke="#c8ebf8" stroke-width="1.3"/></svg></div><div class="b" style="left:1167px;top:532.1px;width:60px"><svg width="12" height="19" viewBox="0 0 12 19" style="position:absolute;left:9.5px;top:9.5px"><path d="M1.2 1.2 H7.5 L10.8 4.5 V17.8 H1.2 Z" fill="none" stroke="#d6f0fb" stroke-width="2.2"/><path d="M3.5 8 H8.5 M3.5 11 H8.5 M3.5 14 H8.5" stroke="#c8ebf8" stroke-width="1.3"/></svg></div><div class="b" style="left:1232px;top:532.1px;width:61px"><svg width="12" height="19" viewBox="0 0 12 19" style="position:absolute;left:9.5px;top:9.5px"><path d="M1.2 1.2 H7.5 L10.8 4.5 V17.8 H1.2 Z" fill="none" stroke="#d6f0fb" stroke-width="2.2"/><path d="M3.5 8 H8.5 M3.5 11 H8.5 M3.5 14 H8.5" stroke="#c8ebf8" stroke-width="1.3"/></svg></div><div class="b" style="left:1298px;top:532.1px;width:52px"><svg width="12" height="19" viewBox="0 0 12 19" style="position:absolute;left:9.5px;top:9.5px"><path d="M1.2 1.2 H7.5 L10.8 4.5 V17.8 H1.2 Z" fill="none" stroke="#d6f0fb" stroke-width="2.2"/><path d="M3.5 8 H8.5 M3.5 11 H8.5 M3.5 14 H8.5" stroke="#c8ebf8" stroke-width="1.3"/></svg></div><div class="b" style="left:1355px;top:532.1px;width:57px"><svg width="12" height="19" viewBox="0 0 12 19" style="position:absolute;left:9.5px;top:9.5px"><path d="M1.2 1.2 H7.5 L10.8 4.5 V17.8 H1.2 Z" fill="none" stroke="#d6f0fb" stroke-width="2.2"/><path d="M3.5 8 H8.5 M3.5 11 H8.5 M3.5 14 H8.5" stroke="#c8ebf8" stroke-width="1.3"/></svg></div><div class="t" style="left:697.0px;top:546.1px;font-size:13px;color:#e8f7fd;transform:scaleX(0.914);font-weight:bold;">DGA</div><div class="t" style="left:763.0px;top:546.1px;font-size:13px;color:#e8f7fd;transform:scaleX(0.931);font-weight:bold;">DGA2</div><div class="t" style="left:836.0px;top:546.1px;font-size:13px;color:#e8f7fd;transform:scaleX(0.907);font-weight:bold;">DSA</div><div class="t" style="left:901.0px;top:546.1px;font-size:13px;color:#e8f7fd;transform:scaleX(0.886);font-weight:bold;">DIC</div><div class="t" style="left:961.0px;top:546.1px;font-size:13px;color:#e8f7fd;transform:scaleX(0.900);font-weight:bold;">TLÇ</div><div class="t" style="left:1023.0px;top:546.1px;font-size:13px;color:#e8f7fd;transform:scaleX(0.890);font-weight:bold;">DSTLÇ1</div><div class="t" style="left:1108.0px;top:546.1px;font-size:13px;color:#e8f7fd;transform:scaleX(0.890);font-weight:bold;">DSTLÇ2</div><div class="t" style="left:1192.0px;top:546.1px;font-size:13px;color:#e8f7fd;transform:scaleX(0.907);font-weight:bold;">RSD</div><div class="t" style="left:1257.0px;top:546.1px;font-size:13px;color:#e8f7fd;transform:scaleX(0.879);font-weight:bold;">DMP</div><div class="t" style="left:1323.0px;top:546.1px;font-size:13px;color:#e8f7fd;transform:scaleX(0.786);font-weight:bold;">DEI</div><div class="t" style="left:1380.0px;top:546.1px;font-size:13px;color:#e8f7fd;transform:scaleX(0.768);font-weight:bold;">DRE</div><div class="row" style="top:580.3px"></div><div class="ph" style="top:591.6px;line-height:0"><svg width="32" height="38" viewBox="0 0 32 38"><rect width="32" height="38" fill="#efe8ee"/><ellipse cx="16" cy="17" rx="7.5" ry="11" fill="#e8b0a8"/><path d="M8 13 C7 5 11 3 16 3 C21 3 25 5 24 12 C22 8 19 7 16 7 C13 7 10 8 8 13 Z" fill="#2a2024"/><ellipse cx="13" cy="15" rx="1.8" ry="1.1" fill="#6a4020"/><ellipse cx="19" cy="15" rx="1.8" ry="1.1" fill="#6a4020"/><path d="M0 38 V33 C2 30 7 29 11 28 L13 38 Z M32 38 V33 C30 30 25 29 21 28 L19 38 Z" fill="#0c0c0c"/><path d="M11 28 H21 L19 38 H13 Z" fill="#f0e4e8"/><path d="M14.5 30 H17.5 L18 38 H14 Z" fill="#d42030"/></svg></div><div class="t" style="left:291.0px;top:596.2px;font-size:17px;color:#8a8a8a;transform:scaleX(0.919);">0006</div><div class="t" style="left:388.2px;top:596.2px;font-size:17px;color:#8a8a8a;transform:scaleX(0.823);">Felipe Saraiva Assad</div><div class="b" style="left:672px;top:591.8px;width:62px"><svg width="12" height="19" viewBox="0 0 12 19" style="position:absolute;left:9.5px;top:9.5px"><path d="M1.2 1.2 H7.5 L10.8 4.5 V17.8 H1.2 Z" fill="none" stroke="#d6f0fb" stroke-width="2.2"/><path d="M3.5 8 H8.5 M3.5 11 H8.5 M3.5 14 H8.5" stroke="#c8ebf8" stroke-width="1.3"/></svg></div><div class="b" style="left:738px;top:591.8px;width:69px"><svg width="12" height="19" viewBox="0 0 12 19" style="position:absolute;left:9.5px;top:9.5px"><path d="M1.2 1.2 H7.5 L10.8 4.5 V17.8 H1.2 Z" fill="none" stroke="#d6f0fb" stroke-width="2.2"/><path d="M3.5 8 H8.5 M3.5 11 H8.5 M3.5 14 H8.5" stroke="#c8ebf8" stroke-width="1.3"/></svg></div><div class="b" style="left:811px;top:591.8px;width:60px"><svg width="12" height="19" viewBox="0 0 12 19" style="position:absolute;left:9.5px;top:9.5px"><path d="M1.2 1.2 H7.5 L10.8 4.5 V17.8 H1.2 Z" fill="none" stroke="#d6f0fb" stroke-width="2.2"/><path d="M3.5 8 H8.5 M3.5 11 H8.5 M3.5 14 H8.5" stroke="#c8ebf8" stroke-width="1.3"/></svg></div><div class="b" style="left:876px;top:591.8px;width:55px"><svg width="12" height="19" viewBox="0 0 12 19" style="position:absolute;left:9.5px;top:9.5px"><path d="M1.2 1.2 H7.5 L10.8 4.5 V17.8 H1.2 Z" fill="none" stroke="#d6f0fb" stroke-width="2.2"/><path d="M3.5 8 H8.5 M3.5 11 H8.5 M3.5 14 H8.5" stroke="#c8ebf8" stroke-width="1.3"/></svg></div><div class="b" style="left:936px;top:591.8px;width:58px"><svg width="12" height="19" viewBox="0 0 12 19" style="position:absolute;left:9.5px;top:9.5px"><path d="M1.2 1.2 H7.5 L10.8 4.5 V17.8 H1.2 Z" fill="none" stroke="#d6f0fb" stroke-width="2.2"/><path d="M3.5 8 H8.5 M3.5 11 H8.5 M3.5 14 H8.5" stroke="#c8ebf8" stroke-width="1.3"/></svg></div><div class="b" style="left:998px;top:591.8px;width:80px"><svg width="12" height="19" viewBox="0 0 12 19" style="position:absolute;left:9.5px;top:9.5px"><path d="M1.2 1.2 H7.5 L10.8 4.5 V17.8 H1.2 Z" fill="none" stroke="#d6f0fb" stroke-width="2.2"/><path d="M3.5 8 H8.5 M3.5 11 H8.5 M3.5 14 H8.5" stroke="#c8ebf8" stroke-width="1.3"/></svg></div><div class="b" style="left:1083px;top:591.8px;width:80px"><svg width="12" height="19" viewBox="0 0 12 19" style="position:absolute;left:9.5px;top:9.5px"><path d="M1.2 1.2 H7.5 L10.8 4.5 V17.8 H1.2 Z" fill="none" stroke="#d6f0fb" stroke-width="2.2"/><path d="M3.5 8 H8.5 M3.5 11 H8.5 M3.5 14 H8.5" stroke="#c8ebf8" stroke-width="1.3"/></svg></div><div class="b" style="left:1167px;top:591.8px;width:60px"><svg width="12" height="19" viewBox="0 0 12 19" style="position:absolute;left:9.5px;top:9.5px"><path d="M1.2 1.2 H7.5 L10.8 4.5 V17.8 H1.2 Z" fill="none" stroke="#d6f0fb" stroke-width="2.2"/><path d="M3.5 8 H8.5 M3.5 11 H8.5 M3.5 14 H8.5" stroke="#c8ebf8" stroke-width="1.3"/></svg></div><div class="b" style="left:1232px;top:591.8px;width:61px"><svg width="12" height="19" viewBox="0 0 12 19" style="position:absolute;left:9.5px;top:9.5px"><path d="M1.2 1.2 H7.5 L10.8 4.5 V17.8 H1.2 Z" fill="none" stroke="#d6f0fb" stroke-width="2.2"/><path d="M3.5 8 H8.5 M3.5 11 H8.5 M3.5 14 H8.5" stroke="#c8ebf8" stroke-width="1.3"/></svg></div><div class="b" style="left:1298px;top:591.8px;width:52px"><svg width="12" height="19" viewBox="0 0 12 19" style="position:absolute;left:9.5px;top:9.5px"><path d="M1.2 1.2 H7.5 L10.8 4.5 V17.8 H1.2 Z" fill="none" stroke="#d6f0fb" stroke-width="2.2"/><path d="M3.5 8 H8.5 M3.5 11 H8.5 M3.5 14 H8.5" stroke="#c8ebf8" stroke-width="1.3"/></svg></div><div class="b" style="left:1355px;top:591.8px;width:57px"><svg width="12" height="19" viewBox="0 0 12 19" style="position:absolute;left:9.5px;top:9.5px"><path d="M1.2 1.2 H7.5 L10.8 4.5 V17.8 H1.2 Z" fill="none" stroke="#d6f0fb" stroke-width="2.2"/><path d="M3.5 8 H8.5 M3.5 11 H8.5 M3.5 14 H8.5" stroke="#c8ebf8" stroke-width="1.3"/></svg></div><div class="t" style="left:697.0px;top:605.8px;font-size:13px;color:#e8f7fd;transform:scaleX(0.914);font-weight:bold;">DGA</div><div class="t" style="left:763.0px;top:605.8px;font-size:13px;color:#e8f7fd;transform:scaleX(0.931);font-weight:bold;">DGA2</div><div class="t" style="left:836.0px;top:605.8px;font-size:13px;color:#e8f7fd;transform:scaleX(0.907);font-weight:bold;">DSA</div><div class="t" style="left:901.0px;top:605.8px;font-size:13px;color:#e8f7fd;transform:scaleX(0.886);font-weight:bold;">DIC</div><div class="t" style="left:961.0px;top:605.8px;font-size:13px;color:#e8f7fd;transform:scaleX(0.900);font-weight:bold;">TLÇ</div><div class="t" style="left:1023.0px;top:605.8px;font-size:13px;color:#e8f7fd;transform:scaleX(0.890);font-weight:bold;">DSTLÇ1</div><div class="t" style="left:1108.0px;top:605.8px;font-size:13px;color:#e8f7fd;transform:scaleX(0.890);font-weight:bold;">DSTLÇ2</div><div class="t" style="left:1192.0px;top:605.8px;font-size:13px;color:#e8f7fd;transform:scaleX(0.907);font-weight:bold;">RSD</div><div class="t" style="left:1257.0px;top:605.8px;font-size:13px;color:#e8f7fd;transform:scaleX(0.879);font-weight:bold;">DMP</div><div class="t" style="left:1323.0px;top:605.8px;font-size:13px;color:#e8f7fd;transform:scaleX(0.786);font-weight:bold;">DEI</div><div class="t" style="left:1380.0px;top:605.8px;font-size:13px;color:#e8f7fd;transform:scaleX(0.768);font-weight:bold;">DRE</div><div class="row" style="top:640.0px"></div><div class="ph" style="top:651.3px;line-height:0"><svg width="32" height="38" viewBox="0 0 32 38"><rect width="32" height="38" fill="#d4d7db"/><ellipse cx="16" cy="17" rx="8.5" ry="11.5" fill="#dcb4a4"/><path d="M8 20 C9 26 12 29 16 29 C20 29 23 26 24 20 C22 24 20 25 16 25 C12 25 10 24 8 20 Z" fill="#6a5048"/><path d="M7 14 C6 5 11 2 16 2 C21 2 26 5 25 13 C23 8 20 7 16 7 C12 7 9 9 7 14 Z" fill="#1e1c1c"/><path d="M0 38 V32 C3 29 8 28 11 28 C13 31 19 31 21 28 C24 28 29 29 32 32 V38 Z" fill="#3a302a"/><path d="M12 30 H20 L18 38 H14 Z" fill="#d8a0a0"/></svg></div><div class="t" style="left:291.0px;top:655.9px;font-size:17px;color:#8a8a8a;transform:scaleX(0.919);">0008</div><div class="t" style="left:389.0px;top:655.9px;font-size:17px;color:#8a8a8a;transform:scaleX(0.831);">Alisson Galvan Bezerra</div><div class="b" style="left:672px;top:651.5px;width:62px"><svg width="12" height="19" viewBox="0 0 12 19" style="position:absolute;left:9.5px;top:9.5px"><path d="M1.2 1.2 H7.5 L10.8 4.5 V17.8 H1.2 Z" fill="none" stroke="#d6f0fb" stroke-width="2.2"/><path d="M3.5 8 H8.5 M3.5 11 H8.5 M3.5 14 H8.5" stroke="#c8ebf8" stroke-width="1.3"/></svg></div><div class="b" style="left:738px;top:651.5px;width:69px"><svg width="12" height="19" viewBox="0 0 12 19" style="position:absolute;left:9.5px;top:9.5px"><path d="M1.2 1.2 H7.5 L10.8 4.5 V17.8 H1.2 Z" fill="none" stroke="#d6f0fb" stroke-width="2.2"/><path d="M3.5 8 H8.5 M3.5 11 H8.5 M3.5 14 H8.5" stroke="#c8ebf8" stroke-width="1.3"/></svg></div><div class="b" style="left:811px;top:651.5px;width:60px"><svg width="12" height="19" viewBox="0 0 12 19" style="position:absolute;left:9.5px;top:9.5px"><path d="M1.2 1.2 H7.5 L10.8 4.5 V17.8 H1.2 Z" fill="none" stroke="#d6f0fb" stroke-width="2.2"/><path d="M3.5 8 H8.5 M3.5 11 H8.5 M3.5 14 H8.5" stroke="#c8ebf8" stroke-width="1.3"/></svg></div><div class="b" style="left:876px;top:651.5px;width:55px"><svg width="12" height="19" viewBox="0 0 12 19" style="position:absolute;left:9.5px;top:9.5px"><path d="M1.2 1.2 H7.5 L10.8 4.5 V17.8 H1.2 Z" fill="none" stroke="#d6f0fb" stroke-width="2.2"/><path d="M3.5 8 H8.5 M3.5 11 H8.5 M3.5 14 H8.5" stroke="#c8ebf8" stroke-width="1.3"/></svg></div><div class="b" style="left:936px;top:651.5px;width:58px"><svg width="12" height="19" viewBox="0 0 12 19" style="position:absolute;left:9.5px;top:9.5px"><path d="M1.2 1.2 H7.5 L10.8 4.5 V17.8 H1.2 Z" fill="none" stroke="#d6f0fb" stroke-width="2.2"/><path d="M3.5 8 H8.5 M3.5 11 H8.5 M3.5 14 H8.5" stroke="#c8ebf8" stroke-width="1.3"/></svg></div><div class="b" style="left:998px;top:651.5px;width:80px"><svg width="12" height="19" viewBox="0 0 12 19" style="position:absolute;left:9.5px;top:9.5px"><path d="M1.2 1.2 H7.5 L10.8 4.5 V17.8 H1.2 Z" fill="none" stroke="#d6f0fb" stroke-width="2.2"/><path d="M3.5 8 H8.5 M3.5 11 H8.5 M3.5 14 H8.5" stroke="#c8ebf8" stroke-width="1.3"/></svg></div><div class="b" style="left:1083px;top:651.5px;width:80px"><svg width="12" height="19" viewBox="0 0 12 19" style="position:absolute;left:9.5px;top:9.5px"><path d="M1.2 1.2 H7.5 L10.8 4.5 V17.8 H1.2 Z" fill="none" stroke="#d6f0fb" stroke-width="2.2"/><path d="M3.5 8 H8.5 M3.5 11 H8.5 M3.5 14 H8.5" stroke="#c8ebf8" stroke-width="1.3"/></svg></div><div class="b" style="left:1167px;top:651.5px;width:60px"><svg width="12" height="19" viewBox="0 0 12 19" style="position:absolute;left:9.5px;top:9.5px"><path d="M1.2 1.2 H7.5 L10.8 4.5 V17.8 H1.2 Z" fill="none" stroke="#d6f0fb" stroke-width="2.2"/><path d="M3.5 8 H8.5 M3.5 11 H8.5 M3.5 14 H8.5" stroke="#c8ebf8" stroke-width="1.3"/></svg></div><div class="b" style="left:1232px;top:651.5px;width:61px"><svg width="12" height="19" viewBox="0 0 12 19" style="position:absolute;left:9.5px;top:9.5px"><path d="M1.2 1.2 H7.5 L10.8 4.5 V17.8 H1.2 Z" fill="none" stroke="#d6f0fb" stroke-width="2.2"/><path d="M3.5 8 H8.5 M3.5 11 H8.5 M3.5 14 H8.5" stroke="#c8ebf8" stroke-width="1.3"/></svg></div><div class="b" style="left:1298px;top:651.5px;width:52px"><svg width="12" height="19" viewBox="0 0 12 19" style="position:absolute;left:9.5px;top:9.5px"><path d="M1.2 1.2 H7.5 L10.8 4.5 V17.8 H1.2 Z" fill="none" stroke="#d6f0fb" stroke-width="2.2"/><path d="M3.5 8 H8.5 M3.5 11 H8.5 M3.5 14 H8.5" stroke="#c8ebf8" stroke-width="1.3"/></svg></div><div class="b" style="left:1355px;top:651.5px;width:57px"><svg width="12" height="19" viewBox="0 0 12 19" style="position:absolute;left:9.5px;top:9.5px"><path d="M1.2 1.2 H7.5 L10.8 4.5 V17.8 H1.2 Z" fill="none" stroke="#d6f0fb" stroke-width="2.2"/><path d="M3.5 8 H8.5 M3.5 11 H8.5 M3.5 14 H8.5" stroke="#c8ebf8" stroke-width="1.3"/></svg></div><div class="t" style="left:697.0px;top:665.5px;font-size:13px;color:#e8f7fd;transform:scaleX(0.914);font-weight:bold;">DGA</div><div class="t" style="left:763.0px;top:665.5px;font-size:13px;color:#e8f7fd;transform:scaleX(0.931);font-weight:bold;">DGA2</div><div class="t" style="left:836.0px;top:665.5px;font-size:13px;color:#e8f7fd;transform:scaleX(0.907);font-weight:bold;">DSA</div><div class="t" style="left:901.0px;top:665.5px;font-size:13px;color:#e8f7fd;transform:scaleX(0.886);font-weight:bold;">DIC</div><div class="t" style="left:961.0px;top:665.5px;font-size:13px;color:#e8f7fd;transform:scaleX(0.900);font-weight:bold;">TLÇ</div><div class="t" style="left:1023.0px;top:665.5px;font-size:13px;color:#e8f7fd;transform:scaleX(0.890);font-weight:bold;">DSTLÇ1</div><div class="t" style="left:1108.0px;top:665.5px;font-size:13px;color:#e8f7fd;transform:scaleX(0.890);font-weight:bold;">DSTLÇ2</div><div class="t" style="left:1192.0px;top:665.5px;font-size:13px;color:#e8f7fd;transform:scaleX(0.907);font-weight:bold;">RSD</div><div class="t" style="left:1257.0px;top:665.5px;font-size:13px;color:#e8f7fd;transform:scaleX(0.879);font-weight:bold;">DMP</div><div class="t" style="left:1323.0px;top:665.5px;font-size:13px;color:#e8f7fd;transform:scaleX(0.786);font-weight:bold;">DEI</div><div class="t" style="left:1380.0px;top:665.5px;font-size:13px;color:#e8f7fd;transform:scaleX(0.768);font-weight:bold;">DRE</div><div class="row" style="top:699.7px"></div><div class="ph" style="top:711.0px;line-height:0"><svg width="32" height="38" viewBox="0 0 32 38"><rect width="32" height="38" fill="#fff"/><path d="M8 31 C10 29 12 28 14 28 H18 C20 28 22 29 24 31 Z" fill="#f0c0a0"/><rect x="12.5" y="20" width="7" height="10" fill="#f2c6a4"/><ellipse cx="16" cy="14" rx="6.5" ry="9" fill="#f5d0b4"/><path d="M9 12 C8 4 12 2 16 2 C20 2 24 4 23 12 C22 8 19 6 16 6 C13 6 10 8 9 12 Z" fill="#141010"/><path d="M1 38 V33 C3 30 7 29 10 29 C12 33 20 33 22 29 C25 29 29 30 31 33 V38 Z" fill="#0a0a0a"/></svg></div><div class="t" style="left:291.0px;top:715.6px;font-size:17px;color:#8a8a8a;transform:scaleX(0.919);">0009</div><div class="t" style="left:389.0px;top:715.6px;font-size:17px;color:#8a8a8a;transform:scaleX(0.844);">Tatiana de Oliveira Marques</div><div class="b" style="left:672px;top:711.2px;width:62px"><svg width="12" height="19" viewBox="0 0 12 19" style="position:absolute;left:9.5px;top:9.5px"><path d="M1.2 1.2 H7.5 L10.8 4.5 V17.8 H1.2 Z" fill="none" stroke="#d6f0fb" stroke-width="2.2"/><path d="M3.5 8 H8.5 M3.5 11 H8.5 M3.5 14 H8.5" stroke="#c8ebf8" stroke-width="1.3"/></svg></div><div class="b" style="left:738px;top:711.2px;width:69px"><svg width="12" height="19" viewBox="0 0 12 19" style="position:absolute;left:9.5px;top:9.5px"><path d="M1.2 1.2 H7.5 L10.8 4.5 V17.8 H1.2 Z" fill="none" stroke="#d6f0fb" stroke-width="2.2"/><path d="M3.5 8 H8.5 M3.5 11 H8.5 M3.5 14 H8.5" stroke="#c8ebf8" stroke-width="1.3"/></svg></div><div class="b" style="left:811px;top:711.2px;width:60px"><svg width="12" height="19" viewBox="0 0 12 19" style="position:absolute;left:9.5px;top:9.5px"><path d="M1.2 1.2 H7.5 L10.8 4.5 V17.8 H1.2 Z" fill="none" stroke="#d6f0fb" stroke-width="2.2"/><path d="M3.5 8 H8.5 M3.5 11 H8.5 M3.5 14 H8.5" stroke="#c8ebf8" stroke-width="1.3"/></svg></div><div class="b" style="left:876px;top:711.2px;width:55px"><svg width="12" height="19" viewBox="0 0 12 19" style="position:absolute;left:9.5px;top:9.5px"><path d="M1.2 1.2 H7.5 L10.8 4.5 V17.8 H1.2 Z" fill="none" stroke="#d6f0fb" stroke-width="2.2"/><path d="M3.5 8 H8.5 M3.5 11 H8.5 M3.5 14 H8.5" stroke="#c8ebf8" stroke-width="1.3"/></svg></div><div class="b" style="left:936px;top:711.2px;width:58px"><svg width="12" height="19" viewBox="0 0 12 19" style="position:absolute;left:9.5px;top:9.5px"><path d="M1.2 1.2 H7.5 L10.8 4.5 V17.8 H1.2 Z" fill="none" stroke="#d6f0fb" stroke-width="2.2"/><path d="M3.5 8 H8.5 M3.5 11 H8.5 M3.5 14 H8.5" stroke="#c8ebf8" stroke-width="1.3"/></svg></div><div class="b" style="left:998px;top:711.2px;width:80px"><svg width="12" height="19" viewBox="0 0 12 19" style="position:absolute;left:9.5px;top:9.5px"><path d="M1.2 1.2 H7.5 L10.8 4.5 V17.8 H1.2 Z" fill="none" stroke="#d6f0fb" stroke-width="2.2"/><path d="M3.5 8 H8.5 M3.5 11 H8.5 M3.5 14 H8.5" stroke="#c8ebf8" stroke-width="1.3"/></svg></div><div class="b" style="left:1083px;top:711.2px;width:80px"><svg width="12" height="19" viewBox="0 0 12 19" style="position:absolute;left:9.5px;top:9.5px"><path d="M1.2 1.2 H7.5 L10.8 4.5 V17.8 H1.2 Z" fill="none" stroke="#d6f0fb" stroke-width="2.2"/><path d="M3.5 8 H8.5 M3.5 11 H8.5 M3.5 14 H8.5" stroke="#c8ebf8" stroke-width="1.3"/></svg></div><div class="b" style="left:1167px;top:711.2px;width:60px"><svg width="12" height="19" viewBox="0 0 12 19" style="position:absolute;left:9.5px;top:9.5px"><path d="M1.2 1.2 H7.5 L10.8 4.5 V17.8 H1.2 Z" fill="none" stroke="#d6f0fb" stroke-width="2.2"/><path d="M3.5 8 H8.5 M3.5 11 H8.5 M3.5 14 H8.5" stroke="#c8ebf8" stroke-width="1.3"/></svg></div><div class="b" style="left:1232px;top:711.2px;width:61px"><svg width="12" height="19" viewBox="0 0 12 19" style="position:absolute;left:9.5px;top:9.5px"><path d="M1.2 1.2 H7.5 L10.8 4.5 V17.8 H1.2 Z" fill="none" stroke="#d6f0fb" stroke-width="2.2"/><path d="M3.5 8 H8.5 M3.5 11 H8.5 M3.5 14 H8.5" stroke="#c8ebf8" stroke-width="1.3"/></svg></div><div class="b" style="left:1298px;top:711.2px;width:52px"><svg width="12" height="19" viewBox="0 0 12 19" style="position:absolute;left:9.5px;top:9.5px"><path d="M1.2 1.2 H7.5 L10.8 4.5 V17.8 H1.2 Z" fill="none" stroke="#d6f0fb" stroke-width="2.2"/><path d="M3.5 8 H8.5 M3.5 11 H8.5 M3.5 14 H8.5" stroke="#c8ebf8" stroke-width="1.3"/></svg></div><div class="b" style="left:1355px;top:711.2px;width:57px"><svg width="12" height="19" viewBox="0 0 12 19" style="position:absolute;left:9.5px;top:9.5px"><path d="M1.2 1.2 H7.5 L10.8 4.5 V17.8 H1.2 Z" fill="none" stroke="#d6f0fb" stroke-width="2.2"/><path d="M3.5 8 H8.5 M3.5 11 H8.5 M3.5 14 H8.5" stroke="#c8ebf8" stroke-width="1.3"/></svg></div><div class="t" style="left:697.0px;top:725.2px;font-size:13px;color:#e8f7fd;transform:scaleX(0.914);font-weight:bold;">DGA</div><div class="t" style="left:763.0px;top:725.2px;font-size:13px;color:#e8f7fd;transform:scaleX(0.931);font-weight:bold;">DGA2</div><div class="t" style="left:836.0px;top:725.2px;font-size:13px;color:#e8f7fd;transform:scaleX(0.907);font-weight:bold;">DSA</div><div class="t" style="left:901.0px;top:725.2px;font-size:13px;color:#e8f7fd;transform:scaleX(0.886);font-weight:bold;">DIC</div><div class="t" style="left:961.0px;top:725.2px;font-size:13px;color:#e8f7fd;transform:scaleX(0.900);font-weight:bold;">TLÇ</div><div class="t" style="left:1023.0px;top:725.2px;font-size:13px;color:#e8f7fd;transform:scaleX(0.890);font-weight:bold;">DSTLÇ1</div><div class="t" style="left:1108.0px;top:725.2px;font-size:13px;color:#e8f7fd;transform:scaleX(0.890);font-weight:bold;">DSTLÇ2</div><div class="t" style="left:1192.0px;top:725.2px;font-size:13px;color:#e8f7fd;transform:scaleX(0.907);font-weight:bold;">RSD</div><div class="t" style="left:1257.0px;top:725.2px;font-size:13px;color:#e8f7fd;transform:scaleX(0.879);font-weight:bold;">DMP</div><div class="t" style="left:1323.0px;top:725.2px;font-size:13px;color:#e8f7fd;transform:scaleX(0.786);font-weight:bold;">DEI</div><div class="t" style="left:1380.0px;top:725.2px;font-size:13px;color:#e8f7fd;transform:scaleX(0.768);font-weight:bold;">DRE</div><div class="row" style="top:759.4px"></div><div class="ph" style="top:770.7px;line-height:0"><svg width="32" height="37" viewBox="0 0 32 37"><rect width="32" height="37" fill="#b6bedb"/><path d="M16 4.5 C11.5 4.5 10 8 10 12 C10 16 11 19 12.5 21.5 C12.5 25 11.5 28.5 8 30.5 C5 32 2 32.5 0 33.5 V37 H32 V33.5 C30 32.5 27 32 24 30.5 C20.5 28.5 19.5 25 19.5 21.5 C21 19 22 16 22 12 C22 8 20.5 4.5 16 4.5 Z" fill="#fcfdfe"/></svg></div><div class="t" style="left:291.0px;top:775.3px;font-size:17px;color:#8a8a8a;transform:scaleX(0.919);">0010</div><div class="t" style="left:388.1px;top:775.3px;font-size:17px;color:#8a8a8a;transform:scaleX(0.859);">Renata Oliveira Andrade</div><div class="b" style="left:672px;top:770.9px;width:62px"><svg width="12" height="19" viewBox="0 0 12 19" style="position:absolute;left:9.5px;top:9.5px"><path d="M1.2 1.2 H7.5 L10.8 4.5 V17.8 H1.2 Z" fill="none" stroke="#d6f0fb" stroke-width="2.2"/><path d="M3.5 8 H8.5 M3.5 11 H8.5 M3.5 14 H8.5" stroke="#c8ebf8" stroke-width="1.3"/></svg></div><div class="b" style="left:738px;top:770.9px;width:69px"><svg width="12" height="19" viewBox="0 0 12 19" style="position:absolute;left:9.5px;top:9.5px"><path d="M1.2 1.2 H7.5 L10.8 4.5 V17.8 H1.2 Z" fill="none" stroke="#d6f0fb" stroke-width="2.2"/><path d="M3.5 8 H8.5 M3.5 11 H8.5 M3.5 14 H8.5" stroke="#c8ebf8" stroke-width="1.3"/></svg></div><div class="b" style="left:811px;top:770.9px;width:60px"><svg width="12" height="19" viewBox="0 0 12 19" style="position:absolute;left:9.5px;top:9.5px"><path d="M1.2 1.2 H7.5 L10.8 4.5 V17.8 H1.2 Z" fill="none" stroke="#d6f0fb" stroke-width="2.2"/><path d="M3.5 8 H8.5 M3.5 11 H8.5 M3.5 14 H8.5" stroke="#c8ebf8" stroke-width="1.3"/></svg></div><div class="b" style="left:876px;top:770.9px;width:55px"><svg width="12" height="19" viewBox="0 0 12 19" style="position:absolute;left:9.5px;top:9.5px"><path d="M1.2 1.2 H7.5 L10.8 4.5 V17.8 H1.2 Z" fill="none" stroke="#d6f0fb" stroke-width="2.2"/><path d="M3.5 8 H8.5 M3.5 11 H8.5 M3.5 14 H8.5" stroke="#c8ebf8" stroke-width="1.3"/></svg></div><div class="b" style="left:936px;top:770.9px;width:58px"><svg width="12" height="19" viewBox="0 0 12 19" style="position:absolute;left:9.5px;top:9.5px"><path d="M1.2 1.2 H7.5 L10.8 4.5 V17.8 H1.2 Z" fill="none" stroke="#d6f0fb" stroke-width="2.2"/><path d="M3.5 8 H8.5 M3.5 11 H8.5 M3.5 14 H8.5" stroke="#c8ebf8" stroke-width="1.3"/></svg></div><div class="b" style="left:998px;top:770.9px;width:80px"><svg width="12" height="19" viewBox="0 0 12 19" style="position:absolute;left:9.5px;top:9.5px"><path d="M1.2 1.2 H7.5 L10.8 4.5 V17.8 H1.2 Z" fill="none" stroke="#d6f0fb" stroke-width="2.2"/><path d="M3.5 8 H8.5 M3.5 11 H8.5 M3.5 14 H8.5" stroke="#c8ebf8" stroke-width="1.3"/></svg></div><div class="b" style="left:1083px;top:770.9px;width:80px"><svg width="12" height="19" viewBox="0 0 12 19" style="position:absolute;left:9.5px;top:9.5px"><path d="M1.2 1.2 H7.5 L10.8 4.5 V17.8 H1.2 Z" fill="none" stroke="#d6f0fb" stroke-width="2.2"/><path d="M3.5 8 H8.5 M3.5 11 H8.5 M3.5 14 H8.5" stroke="#c8ebf8" stroke-width="1.3"/></svg></div><div class="b" style="left:1167px;top:770.9px;width:60px"><svg width="12" height="19" viewBox="0 0 12 19" style="position:absolute;left:9.5px;top:9.5px"><path d="M1.2 1.2 H7.5 L10.8 4.5 V17.8 H1.2 Z" fill="none" stroke="#d6f0fb" stroke-width="2.2"/><path d="M3.5 8 H8.5 M3.5 11 H8.5 M3.5 14 H8.5" stroke="#c8ebf8" stroke-width="1.3"/></svg></div><div class="b" style="left:1232px;top:770.9px;width:61px"><svg width="12" height="19" viewBox="0 0 12 19" style="position:absolute;left:9.5px;top:9.5px"><path d="M1.2 1.2 H7.5 L10.8 4.5 V17.8 H1.2 Z" fill="none" stroke="#d6f0fb" stroke-width="2.2"/><path d="M3.5 8 H8.5 M3.5 11 H8.5 M3.5 14 H8.5" stroke="#c8ebf8" stroke-width="1.3"/></svg></div><div class="b" style="left:1298px;top:770.9px;width:52px"><svg width="12" height="19" viewBox="0 0 12 19" style="position:absolute;left:9.5px;top:9.5px"><path d="M1.2 1.2 H7.5 L10.8 4.5 V17.8 H1.2 Z" fill="none" stroke="#d6f0fb" stroke-width="2.2"/><path d="M3.5 8 H8.5 M3.5 11 H8.5 M3.5 14 H8.5" stroke="#c8ebf8" stroke-width="1.3"/></svg></div><div class="b" style="left:1355px;top:770.9px;width:57px"><svg width="12" height="19" viewBox="0 0 12 19" style="position:absolute;left:9.5px;top:9.5px"><path d="M1.2 1.2 H7.5 L10.8 4.5 V17.8 H1.2 Z" fill="none" stroke="#d6f0fb" stroke-width="2.2"/><path d="M3.5 8 H8.5 M3.5 11 H8.5 M3.5 14 H8.5" stroke="#c8ebf8" stroke-width="1.3"/></svg></div><div class="t" style="left:697.0px;top:784.9px;font-size:13px;color:#e8f7fd;transform:scaleX(0.914);font-weight:bold;">DGA</div><div class="t" style="left:763.0px;top:784.9px;font-size:13px;color:#e8f7fd;transform:scaleX(0.931);font-weight:bold;">DGA2</div><div class="t" style="left:836.0px;top:784.9px;font-size:13px;color:#e8f7fd;transform:scaleX(0.907);font-weight:bold;">DSA</div><div class="t" style="left:901.0px;top:784.9px;font-size:13px;color:#e8f7fd;transform:scaleX(0.886);font-weight:bold;">DIC</div><div class="t" style="left:961.0px;top:784.9px;font-size:13px;color:#e8f7fd;transform:scaleX(0.900);font-weight:bold;">TLÇ</div><div class="t" style="left:1023.0px;top:784.9px;font-size:13px;color:#e8f7fd;transform:scaleX(0.890);font-weight:bold;">DSTLÇ1</div><div class="t" style="left:1108.0px;top:784.9px;font-size:13px;color:#e8f7fd;transform:scaleX(0.890);font-weight:bold;">DSTLÇ2</div><div class="t" style="left:1192.0px;top:784.9px;font-size:13px;color:#e8f7fd;transform:scaleX(0.907);font-weight:bold;">RSD</div><div class="t" style="left:1257.0px;top:784.9px;font-size:13px;color:#e8f7fd;transform:scaleX(0.879);font-weight:bold;">DMP</div><div class="t" style="left:1323.0px;top:784.9px;font-size:13px;color:#e8f7fd;transform:scaleX(0.786);font-weight:bold;">DEI</div><div class="t" style="left:1380.0px;top:784.9px;font-size:13px;color:#e8f7fd;transform:scaleX(0.768);font-weight:bold;">DRE</div><div class="row" style="top:819.1px"></div><div class="ph" style="top:830.4px;line-height:0"><svg width="32" height="37" viewBox="0 0 32 37"><rect width="32" height="37" fill="#b6bedb"/><path d="M16 4.5 C11.5 4.5 10 8 10 12 C10 16 11 19 12.5 21.5 C12.5 25 11.5 28.5 8 30.5 C5 32 2 32.5 0 33.5 V37 H32 V33.5 C30 32.5 27 32 24 30.5 C20.5 28.5 19.5 25 19.5 21.5 C21 19 22 16 22 12 C22 8 20.5 4.5 16 4.5 Z" fill="#fcfdfe"/></svg></div><div class="t" style="left:291.0px;top:835.0px;font-size:17px;color:#8a8a8a;transform:scaleX(0.944);">0011</div><div class="t" style="left:388.2px;top:835.0px;font-size:17px;color:#8a8a8a;transform:scaleX(0.829);">Leandro Pereira dos Santos</div><div class="b" style="left:672px;top:830.6px;width:62px"><svg width="12" height="19" viewBox="0 0 12 19" style="position:absolute;left:9.5px;top:9.5px"><path d="M1.2 1.2 H7.5 L10.8 4.5 V17.8 H1.2 Z" fill="none" stroke="#d6f0fb" stroke-width="2.2"/><path d="M3.5 8 H8.5 M3.5 11 H8.5 M3.5 14 H8.5" stroke="#c8ebf8" stroke-width="1.3"/></svg></div><div class="b" style="left:738px;top:830.6px;width:69px"><svg width="12" height="19" viewBox="0 0 12 19" style="position:absolute;left:9.5px;top:9.5px"><path d="M1.2 1.2 H7.5 L10.8 4.5 V17.8 H1.2 Z" fill="none" stroke="#d6f0fb" stroke-width="2.2"/><path d="M3.5 8 H8.5 M3.5 11 H8.5 M3.5 14 H8.5" stroke="#c8ebf8" stroke-width="1.3"/></svg></div><div class="b" style="left:811px;top:830.6px;width:60px"><svg width="12" height="19" viewBox="0 0 12 19" style="position:absolute;left:9.5px;top:9.5px"><path d="M1.2 1.2 H7.5 L10.8 4.5 V17.8 H1.2 Z" fill="none" stroke="#d6f0fb" stroke-width="2.2"/><path d="M3.5 8 H8.5 M3.5 11 H8.5 M3.5 14 H8.5" stroke="#c8ebf8" stroke-width="1.3"/></svg></div><div class="b" style="left:876px;top:830.6px;width:55px"><svg width="12" height="19" viewBox="0 0 12 19" style="position:absolute;left:9.5px;top:9.5px"><path d="M1.2 1.2 H7.5 L10.8 4.5 V17.8 H1.2 Z" fill="none" stroke="#d6f0fb" stroke-width="2.2"/><path d="M3.5 8 H8.5 M3.5 11 H8.5 M3.5 14 H8.5" stroke="#c8ebf8" stroke-width="1.3"/></svg></div><div class="b" style="left:936px;top:830.6px;width:58px"><svg width="12" height="19" viewBox="0 0 12 19" style="position:absolute;left:9.5px;top:9.5px"><path d="M1.2 1.2 H7.5 L10.8 4.5 V17.8 H1.2 Z" fill="none" stroke="#d6f0fb" stroke-width="2.2"/><path d="M3.5 8 H8.5 M3.5 11 H8.5 M3.5 14 H8.5" stroke="#c8ebf8" stroke-width="1.3"/></svg></div><div class="b" style="left:998px;top:830.6px;width:80px"><svg width="12" height="19" viewBox="0 0 12 19" style="position:absolute;left:9.5px;top:9.5px"><path d="M1.2 1.2 H7.5 L10.8 4.5 V17.8 H1.2 Z" fill="none" stroke="#d6f0fb" stroke-width="2.2"/><path d="M3.5 8 H8.5 M3.5 11 H8.5 M3.5 14 H8.5" stroke="#c8ebf8" stroke-width="1.3"/></svg></div><div class="b" style="left:1083px;top:830.6px;width:80px"><svg width="12" height="19" viewBox="0 0 12 19" style="position:absolute;left:9.5px;top:9.5px"><path d="M1.2 1.2 H7.5 L10.8 4.5 V17.8 H1.2 Z" fill="none" stroke="#d6f0fb" stroke-width="2.2"/><path d="M3.5 8 H8.5 M3.5 11 H8.5 M3.5 14 H8.5" stroke="#c8ebf8" stroke-width="1.3"/></svg></div><div class="b" style="left:1167px;top:830.6px;width:60px"><svg width="12" height="19" viewBox="0 0 12 19" style="position:absolute;left:9.5px;top:9.5px"><path d="M1.2 1.2 H7.5 L10.8 4.5 V17.8 H1.2 Z" fill="none" stroke="#d6f0fb" stroke-width="2.2"/><path d="M3.5 8 H8.5 M3.5 11 H8.5 M3.5 14 H8.5" stroke="#c8ebf8" stroke-width="1.3"/></svg></div><div class="b" style="left:1232px;top:830.6px;width:61px"><svg width="12" height="19" viewBox="0 0 12 19" style="position:absolute;left:9.5px;top:9.5px"><path d="M1.2 1.2 H7.5 L10.8 4.5 V17.8 H1.2 Z" fill="none" stroke="#d6f0fb" stroke-width="2.2"/><path d="M3.5 8 H8.5 M3.5 11 H8.5 M3.5 14 H8.5" stroke="#c8ebf8" stroke-width="1.3"/></svg></div><div class="b" style="left:1298px;top:830.6px;width:52px"><svg width="12" height="19" viewBox="0 0 12 19" style="position:absolute;left:9.5px;top:9.5px"><path d="M1.2 1.2 H7.5 L10.8 4.5 V17.8 H1.2 Z" fill="none" stroke="#d6f0fb" stroke-width="2.2"/><path d="M3.5 8 H8.5 M3.5 11 H8.5 M3.5 14 H8.5" stroke="#c8ebf8" stroke-width="1.3"/></svg></div><div class="b" style="left:1355px;top:830.6px;width:57px"><svg width="12" height="19" viewBox="0 0 12 19" style="position:absolute;left:9.5px;top:9.5px"><path d="M1.2 1.2 H7.5 L10.8 4.5 V17.8 H1.2 Z" fill="none" stroke="#d6f0fb" stroke-width="2.2"/><path d="M3.5 8 H8.5 M3.5 11 H8.5 M3.5 14 H8.5" stroke="#c8ebf8" stroke-width="1.3"/></svg></div><div class="t" style="left:697.0px;top:844.6px;font-size:13px;color:#e8f7fd;transform:scaleX(0.914);font-weight:bold;">DGA</div><div class="t" style="left:763.0px;top:844.6px;font-size:13px;color:#e8f7fd;transform:scaleX(0.931);font-weight:bold;">DGA2</div><div class="t" style="left:836.0px;top:844.6px;font-size:13px;color:#e8f7fd;transform:scaleX(0.907);font-weight:bold;">DSA</div><div class="t" style="left:901.0px;top:844.6px;font-size:13px;color:#e8f7fd;transform:scaleX(0.886);font-weight:bold;">DIC</div><div class="t" style="left:961.0px;top:844.6px;font-size:13px;color:#e8f7fd;transform:scaleX(0.900);font-weight:bold;">TLÇ</div><div class="t" style="left:1023.0px;top:844.6px;font-size:13px;color:#e8f7fd;transform:scaleX(0.890);font-weight:bold;">DSTLÇ1</div><div class="t" style="left:1108.0px;top:844.6px;font-size:13px;color:#e8f7fd;transform:scaleX(0.890);font-weight:bold;">DSTLÇ2</div><div class="t" style="left:1192.0px;top:844.6px;font-size:13px;color:#e8f7fd;transform:scaleX(0.907);font-weight:bold;">RSD</div><div class="t" style="left:1257.0px;top:844.6px;font-size:13px;color:#e8f7fd;transform:scaleX(0.879);font-weight:bold;">DMP</div><div class="t" style="left:1323.0px;top:844.6px;font-size:13px;color:#e8f7fd;transform:scaleX(0.786);font-weight:bold;">DEI</div><div class="t" style="left:1380.0px;top:844.6px;font-size:13px;color:#e8f7fd;transform:scaleX(0.768);font-weight:bold;">DRE</div></div></div></body></html>
